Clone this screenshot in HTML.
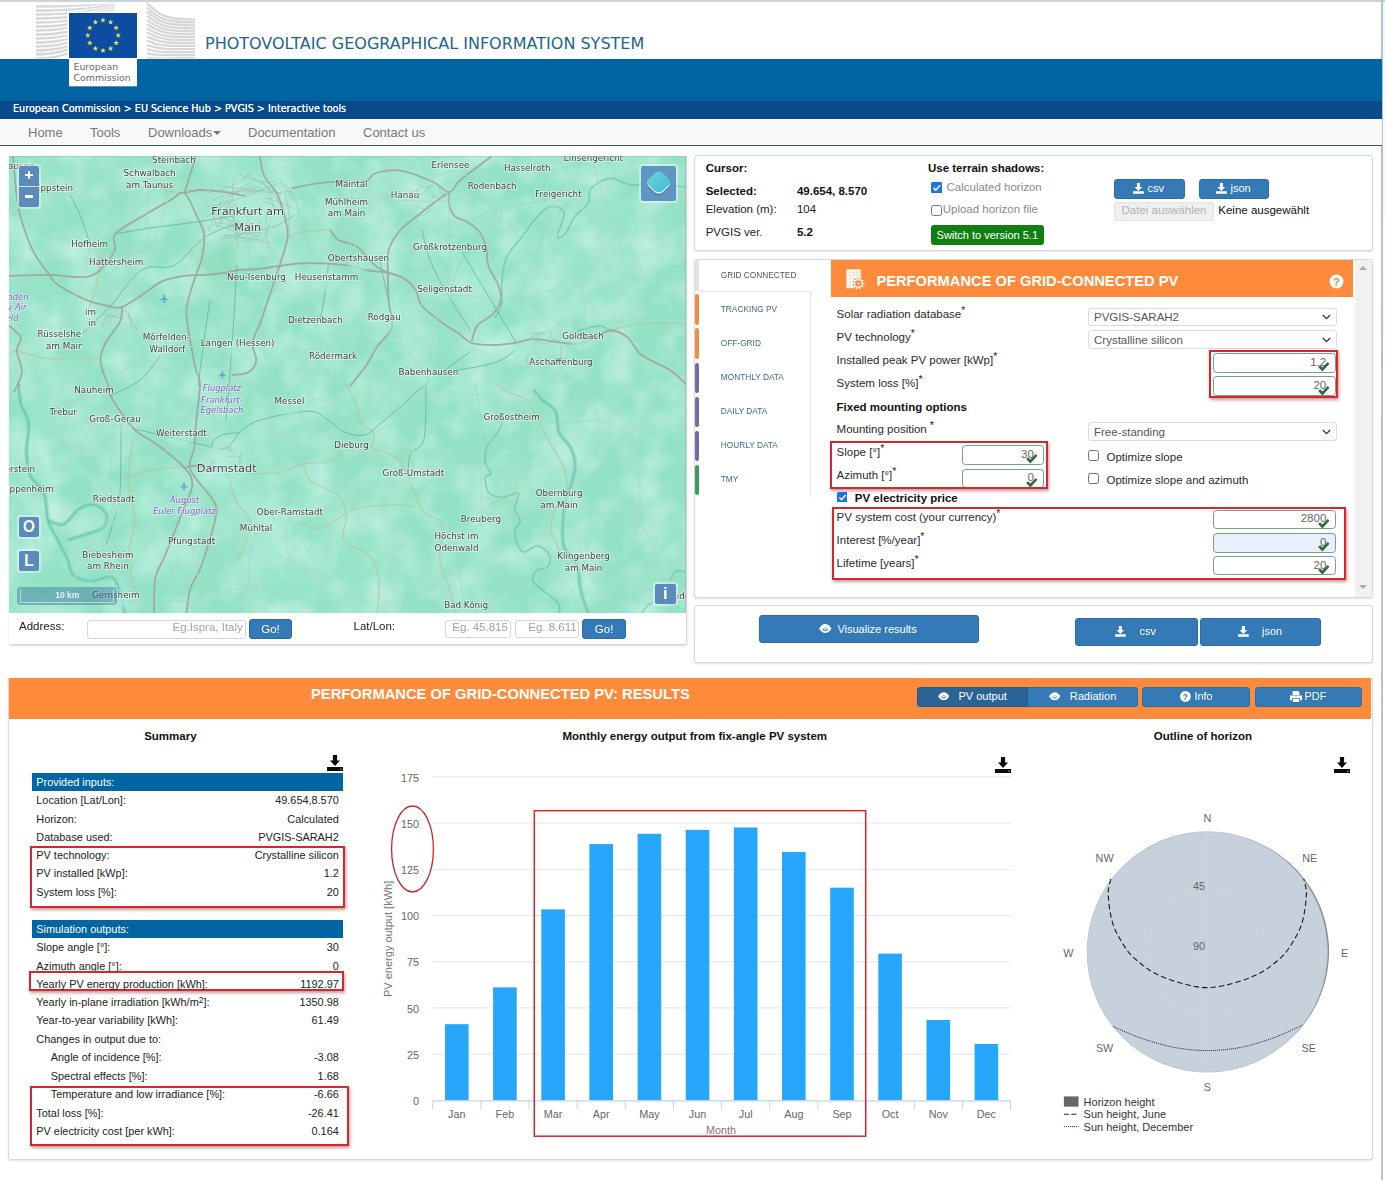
<!DOCTYPE html>
<html lang="en">
<head>
<meta charset="utf-8">
<title>PVGIS - Photovoltaic Geographical Information System</title>
<style>
*{box-sizing:border-box;margin:0;padding:0}
html,body{width:1385px;height:1180px;overflow:hidden;background:#fff}
body{position:relative;font-family:"Liberation Sans",Arial,sans-serif;font-size:12px;color:#222}
.a{position:absolute}
.t{position:absolute;white-space:nowrap;line-height:1}
.v{font-family:"DejaVu Sans","Liberation Sans",sans-serif}
.b{font-weight:bold}
.panel{position:absolute;background:#fff;border:1px solid #d9d9d9;border-radius:3px;box-shadow:0 1px 2px rgba(0,0,0,.12)}
.btn{position:absolute;background:#337ab7;border:1px solid #2e6da4;border-radius:3px;color:#fff;text-align:center;white-space:nowrap}
.inp{position:absolute;background:#fff;border:1px solid #d6d6d6;border-radius:3px}
.red{position:absolute;border:2px solid #d5282e;box-shadow:1px 2px 3px rgba(120,0,0,.4)}
</style>
</head>
<body>
<!-- page frame -->
<div class="a" style="left:0;top:0;width:1385px;height:2px;background:#cdd1d8"></div>
<div class="a" style="left:1381px;top:0;width:1.5px;height:1180px;background:#bcc0c7"></div>
<div class="a" style="left:1382.6px;top:2px;width:2.4px;height:1178px;background:linear-gradient(#eefaff,#fff 40%)"></div>

<!-- HEADER -->
<div id="hdr">
<div class="a" style="left:0;top:59px;width:1381.5px;height:42px;background:#0065a2"></div>
<div class="a" style="left:0;top:100.5px;width:1381.5px;height:18.5px;background:#084a8b"></div>
<div class="a" style="left:0;top:119px;width:1381.5px;height:26.5px;background:#f8f8f8"></div>
<div class="a" style="left:0;top:145px;width:1381.5px;height:1.3px;background:#3d5360"></div>
<div class="t v" style="left:205px;top:35.5px;font-size:16px;color:#1d6490">PHOTOVOLTAIC GEOGRAPHICAL INFORMATION SYSTEM</div>
<div class="t v" style="left:13px;top:103.6px;font-size:9.65px;color:#fff;text-shadow:0 0 .6px #fff">European Commission &gt; EU Science Hub &gt; PVGIS &gt; Interactive tools</div>
<div class="t" style="left:28px;top:125.5px;font-size:13px;color:#777">Home</div>
<div class="t" style="left:90px;top:125.5px;font-size:13px;color:#777">Tools</div>
<div class="t" style="left:148px;top:125.5px;font-size:13px;color:#777">Downloads</div>
<div class="a" style="left:213px;top:131px;width:0;height:0;border-left:4px solid transparent;border-right:4px solid transparent;border-top:4px solid #777"></div>
<div class="t" style="left:248px;top:125.5px;font-size:13px;color:#777">Documentation</div>
<div class="t" style="left:363px;top:125.5px;font-size:13px;color:#777">Contact us</div>
</div>
<!-- LOGO -->
<!--LOGO-S--><svg class="a" style="left:30px;top:0" width="175" height="92" viewBox="30 0 175 92">
<defs><clipPath id="lc"><rect x="30" y="2" width="175" height="56.5"/></clipPath></defs><g clip-path="url(#lc)">
<g fill="#d6d7d9">
<path d="M36 5.25 C 70 5.25, 92 4.62, 115 3.18 L115 3.62 C 92 6.38, 70 7.75, 36 7.75Z"/>
<path d="M36 9.25 C 70 9.25, 92 7.72, 115 3.80 L115 4.24 C 92 9.47, 70 11.75, 36 11.75Z"/>
<path d="M36 13.25 C 70 13.25, 92 10.82, 115 4.42 L115 4.86 C 92 12.57, 70 15.75, 36 15.75Z"/>
<path d="M36 17.25 C 70 17.25, 92 13.93, 115 5.04 L115 5.48 C 92 15.68, 70 19.75, 36 19.75Z"/>
<path d="M36 21.25 C 70 21.25, 92 17.02, 115 5.66 L115 6.10 C 92 18.77, 70 23.75, 36 23.75Z"/>
<path d="M36 25.25 C 70 25.25, 92 20.12, 115 6.28 L115 6.72 C 92 21.88, 70 27.75, 36 27.75Z"/>
<path d="M36 29.25 C 70 29.25, 92 23.23, 115 6.90 L115 7.34 C 92 24.98, 70 31.75, 36 31.75Z"/>
<path d="M36 33.25 C 70 33.25, 92 26.32, 115 7.52 L115 7.96 C 92 28.07, 70 35.75, 36 35.75Z"/>
<path d="M36 37.25 C 70 37.25, 92 29.43, 115 8.14 L115 8.58 C 92 31.18, 70 39.75, 36 39.75Z"/>
<path d="M36 41.25 C 70 41.25, 92 32.52, 115 8.76 L115 9.20 C 92 34.27, 70 43.75, 36 43.75Z"/>
<path d="M36 45.25 C 70 45.25, 92 35.62, 115 9.38 L115 9.82 C 92 37.38, 70 47.75, 36 47.75Z"/>
<path d="M36 49.25 C 70 49.25, 92 38.73, 115 10.00 L115 10.44 C 92 40.48, 70 51.75, 36 51.75Z"/>
<path d="M36 53.25 C 70 53.25, 92 41.83, 115 10.62 L115 11.06 C 92 43.58, 70 55.75, 36 55.75Z"/>
<path d="M36 57.25 C 70 57.25, 92 44.92, 115 11.24 L115 11.68 C 92 46.67, 70 59.75, 36 59.75Z"/>
</g>
<g fill="none" stroke="#d6d7d9" stroke-width="2.2">
<path d="M147 3.0 C 160 16.7, 168 19.5, 195 19.5"/>
<path d="M147 7.2 C 160 20.0, 168 22.4, 195 22.4"/>
<path d="M147 11.4 C 160 23.3, 168 25.4, 195 25.4"/>
<path d="M147 15.6 C 160 26.6, 168 28.4, 195 28.4"/>
<path d="M147 19.8 C 160 29.9, 168 31.3, 195 31.3"/>
<path d="M147 24.0 C 160 33.2, 168 34.2, 195 34.2"/>
<path d="M147 28.2 C 160 36.5, 168 37.2, 195 37.2"/>
<path d="M147 32.4 C 160 39.8, 168 40.2, 195 40.2"/>
<path d="M147 36.6 C 160 43.1, 168 43.1, 195 43.1"/>
<path d="M147 40.8 C 160 46.4, 168 46.0, 195 46.0"/>
<path d="M147 45.0 C 160 49.7, 168 49.0, 195 49.0"/>
<path d="M147 49.2 C 160 53.0, 168 52.0, 195 52.0"/>
<path d="M147 53.4 C 160 56.3, 168 54.9, 195 54.9"/>
<path d="M147 57.6 C 160 59.6, 168 57.9, 195 57.9"/>
</g>
</g>
<rect x="67.5" y="11.5" width="71" height="47" fill="#fff"/>
<rect x="69" y="13" width="68" height="45" fill="#0c4da2"/>
<polygon points="103.00,17.30 103.72,19.21 105.76,19.30 104.16,20.58 104.70,22.55 103.00,21.42 101.30,22.55 101.84,20.58 100.24,19.30 102.28,19.21" fill="#e9e04f"/>
<polygon points="110.60,19.34 111.32,21.25 113.36,21.34 111.76,22.61 112.30,24.58 110.60,23.45 108.90,24.58 109.44,22.61 107.84,21.34 109.88,21.25" fill="#e9e04f"/>
<polygon points="116.16,24.90 116.88,26.81 118.92,26.90 117.32,28.18 117.87,30.15 116.16,29.02 114.46,30.15 115.01,28.18 113.41,26.90 115.45,26.81" fill="#e9e04f"/>
<polygon points="118.20,32.50 118.92,34.41 120.96,34.50 119.36,35.78 119.90,37.75 118.20,36.62 116.50,37.75 117.04,35.78 115.44,34.50 117.48,34.41" fill="#e9e04f"/>
<polygon points="116.16,40.10 116.88,42.01 118.92,42.10 117.32,43.38 117.87,45.35 116.16,44.22 114.46,45.35 115.01,43.38 113.41,42.10 115.45,42.01" fill="#e9e04f"/>
<polygon points="110.60,45.66 111.32,47.58 113.36,47.67 111.76,48.94 112.30,50.91 110.60,49.78 108.90,50.91 109.44,48.94 107.84,47.67 109.88,47.58" fill="#e9e04f"/>
<polygon points="103.00,47.70 103.72,49.61 105.76,49.70 104.16,50.98 104.70,52.95 103.00,51.82 101.30,52.95 101.84,50.98 100.24,49.70 102.28,49.61" fill="#e9e04f"/>
<polygon points="95.40,45.66 96.12,47.58 98.16,47.67 96.56,48.94 97.10,50.91 95.40,49.78 93.70,50.91 94.24,48.94 92.64,47.67 94.68,47.58" fill="#e9e04f"/>
<polygon points="89.84,40.10 90.55,42.01 92.59,42.10 90.99,43.38 91.54,45.35 89.84,44.22 88.13,45.35 88.68,43.38 87.08,42.10 89.12,42.01" fill="#e9e04f"/>
<polygon points="87.80,32.50 88.52,34.41 90.56,34.50 88.96,35.78 89.50,37.75 87.80,36.62 86.10,37.75 86.64,35.78 85.04,34.50 87.08,34.41" fill="#e9e04f"/>
<polygon points="89.84,24.90 90.55,26.81 92.59,26.90 90.99,28.18 91.54,30.15 89.84,29.02 88.13,30.15 88.68,28.18 87.08,26.90 89.12,26.81" fill="#e9e04f"/>
<polygon points="95.40,19.34 96.12,21.25 98.16,21.34 96.56,22.61 97.10,24.58 95.40,23.45 93.70,24.58 94.24,22.61 92.64,21.34 94.68,21.25" fill="#e9e04f"/>
<rect x="69" y="58" width="68" height="28.5" fill="#fff"/>
<rect x="69" y="86.5" width="68" height="1" fill="#0a4f85" opacity=".55"/>
<text x="73.5" y="70.3" font-family="DejaVu Sans, sans-serif" font-size="9.4" fill="#6a6a6a">European</text>
<text x="73.5" y="80.6" font-family="DejaVu Sans, sans-serif" font-size="9.4" fill="#6a6a6a">Commission</text>
</svg><!--LOGO-E-->

<!-- MAP -->
<!--MAP-S--><div class="a" style="left:8.5px;top:155.5px;width:678px;height:489px;border:1px solid #d4d4d4;border-top:0;border-radius:0 0 3px 3px;box-shadow:0 1px 2px rgba(0,0,0,.15)"></div>
<svg class="a" style="left:9px;top:156px" width="676.5" height="457" viewBox="9 156 676.5 457">
<defs><filter id="bl" x="-20%" y="-20%" width="140%" height="140%"><feGaussianBlur stdDeviation="6"/></filter><filter id="tx" x="0" y="0" width="100%" height="100%"><feTurbulence type="fractalNoise" baseFrequency="0.03" numOctaves="3" seed="4"/><feColorMatrix values="0 0 0 0 0.67  0 0 0 0 0.93  0 0 0 0 0.86  1.6 0 0 0 -0.62"/></filter><filter id="tx2" x="0" y="0" width="100%" height="100%"><feTurbulence type="fractalNoise" baseFrequency="0.022" numOctaves="2" seed="9"/><feColorMatrix values="0 0 0 0 0.5  0 0 0 0 0.82  0 0 0 0 0.68  0 1.5 0 0 -0.62"/></filter><filter id="bl2" x="-30%" y="-30%" width="160%" height="160%"><feGaussianBlur stdDeviation="2.5"/></filter></defs>
<rect x="9" y="156" width="677" height="457" fill="#93e2c6"/>
<g filter="url(#bl)">
<ellipse cx="250" cy="205" rx="45" ry="35" fill="#a6ead6" opacity="0.8"/>
<ellipse cx="215" cy="255" rx="30" ry="18" fill="#86d9b8" opacity="0.7"/>
<ellipse cx="435" cy="200" rx="30" ry="25" fill="#a6ead6" opacity="0.7"/>
<ellipse cx="225" cy="470" rx="25" ry="30" fill="#a3e9d4" opacity="0.7"/>
<ellipse cx="520" cy="345" rx="55" ry="18" fill="#a3e9d4" opacity="0.7"/>
<ellipse cx="480" cy="290" rx="18" ry="40" fill="#a6ead6" opacity="0.7"/>
<ellipse cx="600" cy="260" rx="55" ry="60" fill="#9ae6cc" opacity="0.7"/>
<ellipse cx="150" cy="330" rx="50" ry="25" fill="#97e5c8" opacity="0.6"/>
<ellipse cx="320" cy="560" rx="70" ry="40" fill="#9ae6cc" opacity="0.6"/>
<ellipse cx="60" cy="250" rx="40" ry="50" fill="#96e4c7" opacity="0.6"/>
<ellipse cx="620" cy="480" rx="50" ry="90" fill="#93e3c6" opacity="0.6"/>
<ellipse cx="260" cy="520" rx="25" ry="60" fill="#9be7ce" opacity="0.6"/>
<ellipse cx="390" cy="300" rx="14" ry="40" fill="#a3e9d4" opacity="0.6"/>
<ellipse cx="560" cy="470" rx="12" ry="70" fill="#a6ead6" opacity="0.7"/>
<ellipse cx="40" cy="480" rx="20" ry="90" fill="#a0e8d2" opacity="0.6"/>
</g>
<rect x="9" y="156" width="677" height="457" filter="url(#tx)" opacity=".8"/>
<rect x="9" y="156" width="677" height="457" filter="url(#tx2)" opacity=".55"/>
<g fill="none" stroke="#7fd3bd" stroke-width="4.5" stroke-opacity=".55" stroke-linejoin="round">
<path d="M18.7 384.0 C19.0 387.2 19.1 397.0 20.7 403.5 C22.3 410.0 27.5 414.9 28.5 423.0 C29.5 431.1 26.2 443.4 26.5 452.2 C26.8 461.0 27.5 468.8 30.4 475.6 C33.3 482.4 41.1 485.7 44.0 493.2 C46.9 500.7 45.7 512.7 48.0 520.5 C50.3 528.3 54.5 533.5 57.7 540.0 C61.0 546.5 64.9 553.6 67.5 559.4 C70.1 565.2 69.4 571.4 73.3 575.0 C77.2 578.6 84.7 580.6 90.9 580.9 C97.1 581.2 105.9 576.0 110.4 577.0 C115.0 578.0 115.8 580.5 118.2 586.7 C120.6 592.9 123.9 609.5 125.0 614.0"/>
<path d="M48.0 520.5 C50.6 521.1 58.4 526.4 63.6 524.4 C68.8 522.4 74.0 512.0 79.2 508.8 C84.4 505.6 90.2 503.9 94.8 504.9 C99.3 505.9 105.2 510.7 106.5 514.6 C107.8 518.5 105.8 525.0 102.6 528.2 C99.3 531.4 92.8 532.0 87.0 534.0 C81.2 536.0 70.8 539.0 67.5 540.0"/>
<path d="M534.0 389.8 C535.3 391.4 538.2 396.0 541.8 399.6 C545.4 403.2 552.5 405.8 555.4 411.3 C558.3 416.8 556.7 426.5 559.3 432.7 C561.9 438.9 568.4 442.8 571.0 448.3 C573.6 453.8 575.0 459.7 575.0 465.9 C575.0 472.1 572.6 479.5 571.0 485.4 C569.4 491.2 566.5 491.3 565.2 501.0 C563.9 510.7 561.2 533.1 563.2 543.8 C565.2 554.5 574.0 557.5 576.9 565.3 C579.8 573.1 578.9 582.5 580.8 590.6 C582.7 598.7 587.2 610.1 588.5 614.0"/>
</g>
<g fill="none" stroke="#7fb6c4" stroke-width="1.2" stroke-opacity=".7" stroke-dasharray="3 2.5">
<path d="M18.7 384.0 C19.0 387.2 19.1 397.0 20.7 403.5 C22.3 410.0 27.5 414.9 28.5 423.0 C29.5 431.1 26.2 443.4 26.5 452.2 C26.8 461.0 27.5 468.8 30.4 475.6 C33.3 482.4 41.1 485.7 44.0 493.2 C46.9 500.7 47.3 516.0 48.0 520.5"/>
</g>
<g fill="none" stroke="#63c29d" stroke-width="1.7" stroke-opacity=".6" stroke-linejoin="round">
<path d="M686.0 187.2 C680.2 186.5 660.1 183.6 651.0 183.3 C641.9 183.0 638.2 186.0 631.4 185.2 C624.6 184.4 616.8 177.8 610.0 178.4 C603.2 179.0 594.1 184.9 590.5 189.0 C586.9 193.1 591.1 198.2 588.5 202.8 C585.9 207.4 578.9 211.2 575.0 216.4 C571.1 221.6 567.9 230.7 565.0 234.0 C562.1 237.3 557.6 239.6 557.4 236.0 C557.2 232.4 565.3 217.4 564.0 212.5 C562.7 207.6 554.6 205.4 549.6 206.7 C544.6 208.0 538.2 215.8 534.0 220.3 C529.8 224.9 528.8 227.8 524.2 234.0 C519.7 240.2 510.4 249.3 506.7 257.4 C503.0 265.5 502.6 274.9 501.8 282.7 C501.0 290.5 502.9 298.3 501.8 304.2 C500.7 310.1 496.1 315.5 495.0 317.8"/>
<path d="M502.8 423.0 C502.1 424.3 501.5 426.9 498.9 430.8 C496.3 434.7 489.5 441.2 487.2 446.4 C484.9 451.6 484.6 457.4 485.2 462.0 C485.8 466.6 491.0 471.1 491.0 473.7 C491.0 476.3 485.5 474.4 485.2 477.6 C484.9 480.9 486.2 490.0 489.1 493.2 C492.0 496.4 497.9 497.0 502.8 497.0 C507.7 497.0 516.4 491.2 518.4 493.2 C520.4 495.2 514.2 504.2 514.5 508.8 C514.8 513.4 520.3 516.6 520.3 520.5 C520.3 524.4 514.2 527.0 514.5 532.2 C514.8 537.4 518.4 549.3 522.3 551.6 C526.2 553.9 533.3 545.1 537.9 545.8 C542.5 546.4 548.0 551.9 549.6 555.5 C551.2 559.1 549.9 564.6 547.6 567.2 C545.3 569.8 538.2 568.5 535.9 571.1 C533.6 573.7 530.4 577.6 534.0 582.8 C537.6 588.0 553.2 597.1 557.4 602.3 C561.6 607.5 559.0 612.0 559.3 614.0"/>
<path d="M534.0 389.8 C535.3 391.4 538.2 396.0 541.8 399.6 C545.4 403.2 552.5 405.8 555.4 411.3 C558.3 416.8 556.7 426.5 559.3 432.7 C561.9 438.9 568.4 442.8 571.0 448.3 C573.6 453.8 575.0 459.7 575.0 465.9 C575.0 472.1 572.6 479.5 571.0 485.4 C569.4 491.2 566.5 491.3 565.2 501.0 C563.9 510.7 561.2 533.1 563.2 543.8 C565.2 554.5 574.0 557.5 576.9 565.3 C579.8 573.1 578.9 582.5 580.8 590.6 C582.7 598.7 587.2 610.1 588.5 614.0"/>
<path d="M18.7 384.0 C19.0 387.2 19.1 397.0 20.7 403.5 C22.3 410.0 27.5 414.9 28.5 423.0 C29.5 431.1 26.2 443.4 26.5 452.2 C26.8 461.0 27.5 468.8 30.4 475.6 C33.3 482.4 41.1 485.7 44.0 493.2 C46.9 500.7 45.7 512.7 48.0 520.5 C50.3 528.3 54.5 533.5 57.7 540.0 C61.0 546.5 64.9 553.6 67.5 559.4 C70.1 565.2 69.4 571.4 73.3 575.0 C77.2 578.6 84.7 580.6 90.9 580.9 C97.1 581.2 105.9 576.0 110.4 577.0 C115.0 578.0 115.8 580.5 118.2 586.7 C120.6 592.9 123.9 609.5 125.0 614.0"/>
<path d="M48.0 520.5 C50.6 521.1 58.4 526.4 63.6 524.4 C68.8 522.4 74.0 512.0 79.2 508.8 C84.4 505.6 90.2 503.9 94.8 504.9 C99.3 505.9 105.2 510.7 106.5 514.6 C107.8 518.5 105.8 525.0 102.6 528.2 C99.3 531.4 92.8 532.0 87.0 534.0 C81.2 536.0 70.8 539.0 67.5 540.0"/>
<path d="M641.2 614.0 C642.8 612.2 646.1 604.7 651.0 603.0 C655.9 601.3 664.6 602.8 670.4 604.0 C676.2 605.2 683.4 609.0 686.0 610.0"/>
<path d="M670.0 580.0 C671.0 578.5 673.3 572.3 676.0 571.0 C678.7 569.7 684.3 571.8 686.0 572.0"/>
<path d="M610.0 330.5 C608.3 329.8 603.7 326.4 600.0 326.0 C596.3 325.6 592.0 327.0 588.0 328.0 C584.0 329.0 578.0 331.3 576.0 332.0"/>
</g>
<g fill="none" stroke="#5aa98f" stroke-width=".9" stroke-opacity=".75">
<path d="M239.0 222.3 C233.2 224.9 214.7 230.8 204.0 237.9 C193.3 245.1 183.8 260.3 174.7 265.2 C165.6 270.1 156.2 265.2 149.4 267.1 C142.6 269.1 140.0 270.7 133.8 276.9 C127.6 283.1 118.8 296.6 112.3 304.1 C105.8 311.6 99.7 316.8 94.8 321.7 C89.9 326.6 85.0 331.4 83.0 333.4"/>
<path d="M236.8 265.2 C236.2 276.2 234.3 311.3 233.0 331.4 C231.7 351.5 230.2 371.2 229.0 386.0 C227.8 400.8 226.5 414.3 226.0 420.0"/>
<path d="M328.4 265.2 C327.4 272.3 324.6 297.6 322.6 308.0 C320.7 318.4 317.7 324.2 316.7 327.5"/>
<path d="M461.8 251.5 L516.4 343.0"/>
<path d="M456.0 370.4 C462.5 369.1 485.2 365.8 495.0 362.6 C504.8 359.4 511.2 352.9 514.5 351.0"/>
<path d="M121.0 423.0 C120.8 434.7 121.2 476.8 120.0 493.0 C118.8 509.2 116.3 511.3 114.0 520.0 C111.7 528.7 107.3 540.8 106.0 545.0"/>
<path d="M229.0 446.4 C232.9 442.5 239.4 428.9 252.4 423.0 C265.4 417.1 294.6 412.0 307.0 411.3 C319.4 410.6 320.0 415.4 326.5 419.0 C333.0 422.6 339.5 430.1 346.0 432.7 C352.5 435.3 359.7 436.3 365.5 434.7 C371.3 433.1 374.5 428.2 381.0 423.0 C387.5 417.8 396.9 410.0 404.4 403.5 C411.9 397.0 415.0 392.6 425.9 384.0 C436.8 375.4 462.6 357.3 470.0 352.0"/>
<path d="M425.9 384.0 C425.6 393.1 426.6 426.9 424.0 438.6 C421.4 450.3 412.9 447.7 410.3 454.2 C407.7 460.7 408.6 473.7 408.3 477.6"/>
<path d="M211.7 448.3 C212.0 447.0 211.8 442.8 213.7 440.5 C215.6 438.2 219.2 436.0 223.4 434.7 C227.6 433.4 236.4 433.0 239.0 432.7"/>
<path d="M115.2 234.0 C121.0 233.0 136.5 230.0 150.0 228.0 C163.5 226.0 181.2 224.2 196.0 222.0 C210.8 219.8 231.8 216.2 239.0 215.0"/>
<path d="M110.4 395.7 C115.3 393.1 131.7 386.6 140.0 380.0 C148.3 373.4 156.7 360.0 160.0 356.0"/>
<path d="M133.8 428.8 C139.8 430.2 157.1 434.0 170.0 437.0 C182.9 440.0 204.2 445.3 211.0 447.0"/>
<path d="M210.0 300.0 C209.0 306.7 206.0 325.7 204.0 340.0 C202.0 354.3 199.0 378.3 198.0 386.0"/>
<path d="M388.8 302.2 C388.0 298.5 385.5 286.7 384.0 280.0 C382.5 273.3 380.7 265.0 380.0 262.0"/>
<path d="M422.0 230.0 C423.3 235.0 426.2 250.0 430.0 260.0 C433.8 270.0 438.3 278.3 445.0 290.0 C451.7 301.7 465.8 323.3 470.0 330.0"/>
<path d="M70.0 195.0 C71.7 198.3 76.7 207.0 80.0 215.0 C83.3 223.0 88.3 238.3 90.0 243.0"/>
</g>
<g fill="none" stroke="#b3c8a3" stroke-width="1.3" stroke-opacity=".8">
<path d="M248.5 473.7 C253.4 473.5 268.6 474.3 277.7 472.7 C286.8 471.1 294.9 465.8 303.0 464.0 C311.1 462.2 319.3 464.1 326.5 462.0 C333.7 459.9 338.9 453.6 346.0 451.3 C353.1 449.0 364.8 451.4 369.4 448.3 C373.9 445.2 374.6 436.6 373.3 432.7 C372.0 428.8 364.4 429.9 361.5 425.0 C358.6 420.1 358.3 410.3 355.7 403.5 C353.1 396.7 347.6 387.2 346.0 384.0"/>
<path d="M373.3 448.3 C377.2 449.9 390.8 453.1 396.6 458.0 C402.4 462.9 405.1 471.1 408.3 477.6 C411.5 484.1 413.4 491.2 416.0 497.0 C418.6 502.8 420.1 508.7 424.0 512.6 C427.9 516.5 436.3 517.9 439.5 520.5 C442.7 523.1 442.8 526.9 443.4 528.2"/>
<path d="M303.0 464.0 C304.3 466.9 305.2 476.3 311.0 481.5 C316.8 486.7 332.2 489.1 338.0 495.0 C343.8 500.9 345.0 509.1 346.0 516.6 C347.0 524.1 340.1 533.5 344.0 540.0 C347.9 546.5 363.6 549.0 369.4 555.5 C375.2 562.0 377.7 569.2 379.0 579.0 C380.3 588.8 377.3 608.2 377.0 614.0"/>
<path d="M281.6 514.6 C287.5 516.9 307.3 527.6 316.7 528.2 C326.1 528.9 331.5 521.7 338.0 518.5 C344.5 515.3 346.2 511.1 355.7 508.8 C365.1 506.5 384.6 505.2 394.7 504.9 C404.8 504.6 412.4 506.5 416.0 506.8"/>
<path d="M497.0 384.0 C498.6 385.3 501.8 389.2 506.7 391.8 C511.6 394.4 521.0 395.1 526.2 399.6 C531.4 404.1 534.0 411.9 537.9 419.0 C541.8 426.1 545.7 435.3 549.6 442.5 C553.5 449.7 558.4 455.5 561.3 462.0 C564.2 468.5 566.4 476.3 567.0 481.5 C567.6 486.7 567.5 488.0 565.2 493.2 C563.0 498.4 555.8 506.1 553.5 512.6 C551.2 519.1 550.9 526.5 551.5 532.0 C552.1 537.5 555.8 541.2 557.4 545.8 C559.0 550.4 560.6 557.1 561.3 559.4"/>
<path d="M610.0 330.5 C615.2 329.4 628.5 324.8 641.2 323.6 C653.9 322.5 678.5 323.6 686.0 323.6"/>
<path d="M9.0 354.8 C10.3 354.2 10.3 350.4 16.8 351.0 C23.3 351.6 34.4 357.6 48.0 358.7 C61.6 359.8 90.2 357.9 98.7 357.8"/>
<path d="M229.0 475.0 C230.0 479.2 231.5 492.5 235.0 500.0 C238.5 507.5 248.3 512.5 250.0 520.0 C251.7 527.5 247.3 538.3 245.0 545.0 C242.7 551.7 237.5 557.5 236.0 560.0"/>
<path d="M443.4 528.2 C442.8 533.5 438.9 549.7 440.0 560.0 C441.1 570.3 447.3 581.0 450.0 590.0 C452.7 599.0 455.0 610.0 456.0 614.0"/>
<path d="M133.0 440.0 C132.2 446.7 127.7 466.7 128.0 480.0 C128.3 493.3 135.0 506.7 135.0 520.0 C135.0 533.3 127.2 546.7 128.0 560.0 C128.8 573.3 138.0 593.3 140.0 600.0"/>
<path d="M184.0 467.0 C178.3 467.5 160.7 467.8 150.0 470.0 C139.3 472.2 125.0 478.3 120.0 480.0"/>
<path d="M90.0 243.0 C91.7 245.8 99.2 252.2 100.0 260.0 C100.8 267.8 97.0 281.7 95.0 290.0 C93.0 298.3 89.2 306.7 88.0 310.0"/>
<path d="M150.0 175.0 C152.5 177.5 159.3 187.0 165.0 190.0 C170.7 193.0 180.8 192.5 184.0 193.0"/>
<path d="M518.0 493.0 C515.0 494.2 505.0 498.0 500.0 500.0 C495.0 502.0 490.0 504.2 488.0 505.0"/>
<path d="M330.4 230.0 C325.3 230.3 307.1 230.7 300.0 232.0 C292.9 233.3 289.6 236.9 287.5 237.9"/>
</g>
<g fill="none" stroke="#9ea69d" stroke-width="1.8" stroke-opacity=".92" stroke-linejoin="round">
<path d="M13.0 156.0 C13.9 164.8 15.5 193.0 18.7 208.6 C21.9 224.2 27.5 238.9 32.4 249.6 C37.3 260.3 43.8 267.1 48.0 273.0 C52.2 278.9 51.2 280.2 57.7 284.7 C64.2 289.2 78.5 296.6 87.0 300.2 C95.5 303.8 102.6 304.9 108.4 306.0 C114.2 307.1 115.8 309.2 122.0 307.0 C128.2 304.8 138.7 296.9 145.5 292.5 C152.3 288.1 156.5 283.6 163.0 280.8 C169.5 278.0 177.6 276.9 184.4 275.9 C191.2 274.9 197.5 275.4 204.0 274.9 C210.5 274.4 217.6 273.8 223.4 273.0 C229.2 272.2 233.2 270.7 239.0 270.0 C244.8 269.3 251.2 269.7 258.0 269.0 C264.8 268.3 271.5 267.0 279.7 266.0 C287.9 265.0 295.9 263.3 307.0 263.2 C318.1 263.1 336.2 264.1 346.0 265.2 C355.8 266.3 358.4 268.7 365.5 270.0 C372.6 271.3 382.3 271.5 388.8 273.0 C395.3 274.5 399.9 275.9 404.4 278.8 C408.9 281.7 413.1 286.0 416.0 290.5 C418.9 295.0 417.4 300.5 422.0 306.0 C426.6 311.5 437.2 319.0 443.4 323.6 C449.6 328.2 454.3 330.2 459.0 333.4 C463.7 336.6 465.6 341.1 471.6 343.0 C477.6 344.9 487.9 345.0 495.0 345.0 C502.1 345.0 508.0 344.0 514.5 343.0 C521.0 342.0 526.9 339.3 534.0 339.2 C541.1 339.1 550.2 341.4 557.4 342.2 C564.5 343.0 571.0 344.5 576.9 344.0 C582.8 343.5 587.0 341.4 592.5 339.2 C598.0 336.9 604.2 330.8 610.0 330.5 C615.8 330.2 622.3 333.2 627.5 337.3 C632.7 341.4 634.1 349.3 641.2 354.8 C648.4 360.3 662.9 365.5 670.4 370.4 C677.9 375.3 683.4 381.7 686.0 384.0"/>
<path d="M122.0 307.0 C121.7 309.4 122.6 316.0 120.0 321.7 C117.4 327.4 109.7 335.3 106.5 341.2 C103.3 347.1 101.2 351.9 100.6 356.8 C99.9 361.7 101.3 365.5 102.6 370.4 C103.9 375.3 107.1 381.8 108.4 386.0 C109.7 390.2 106.2 388.6 110.4 395.7 C114.6 402.8 126.0 420.7 133.8 428.8 C141.6 436.9 148.6 437.9 157.0 444.4 C165.4 450.9 178.5 461.0 184.4 467.8 C190.3 474.6 192.8 477.3 192.2 485.4 C191.5 493.5 185.0 504.9 180.5 516.6 C176.0 528.3 169.2 545.1 165.0 555.5 C160.8 565.9 157.0 569.2 155.2 579.0 C153.4 588.8 154.4 608.2 154.2 614.0"/>
<path d="M9.0 275.9 C15.8 275.7 36.4 274.9 50.0 274.9 C63.6 274.9 80.2 279.8 90.9 275.9 C101.6 272.0 110.2 258.5 114.3 251.5 C118.3 244.5 110.0 240.2 115.2 234.0 C120.4 227.8 136.2 220.2 145.5 214.5 C154.8 208.8 164.3 203.5 170.8 199.9 C177.3 196.3 180.2 190.6 184.4 193.0 C188.6 195.4 192.7 207.7 196.0 214.5 C199.3 221.3 203.0 226.8 204.0 234.0 C205.0 241.2 203.3 250.6 202.0 257.4 C200.7 264.2 197.9 269.0 196.0 274.9 C194.1 280.8 191.9 286.3 190.3 292.5 C188.7 298.7 186.4 303.9 186.4 312.0 C186.4 320.1 188.7 331.5 190.3 341.2 C191.9 350.9 194.4 363.3 196.0 370.4 C197.6 377.5 200.0 375.2 200.0 384.0 C200.0 392.8 197.0 412.3 196.0 423.0 C195.0 433.7 195.1 440.5 194.2 448.3 C193.2 456.1 187.1 461.0 190.3 469.8 C193.6 478.6 209.5 493.2 213.7 501.0 C217.9 508.8 216.2 510.1 215.6 516.6 C214.9 523.1 212.4 531.2 209.8 540.0 C207.2 548.8 203.2 561.1 200.0 569.2 C196.8 577.3 192.6 581.2 190.3 588.7 C188.0 596.2 187.1 609.8 186.4 614.0"/>
<path d="M184.4 193.0 C187.0 192.5 193.2 190.2 200.0 190.0 C206.8 189.8 217.5 191.0 225.0 192.0 C232.5 193.0 241.7 195.3 245.0 196.0"/>
<path d="M184.4 193.0 C185.3 190.0 188.1 181.2 190.0 175.0 C191.9 168.8 195.0 159.2 196.0 156.0"/>
<path d="M260.0 156.0 C260.7 159.2 261.1 169.0 264.0 175.5 C266.9 182.0 274.1 187.5 277.7 195.0 C281.3 202.5 283.9 213.2 285.5 220.3 C287.1 227.5 288.5 230.4 287.5 237.9 C286.5 245.4 282.9 254.8 279.7 265.2 C276.4 275.6 271.3 290.5 268.0 300.2 C264.7 309.9 262.6 316.5 260.0 323.6 C257.4 330.7 253.0 336.8 252.4 343.0 C251.8 349.2 256.9 355.8 256.3 360.7 C255.7 365.6 252.6 370.0 248.5 372.4 C244.4 374.8 234.8 374.6 232.0 375.0"/>
<path d="M447.3 193.0 C443.4 195.9 431.8 204.4 424.0 210.6 C416.2 216.8 406.4 223.5 400.5 230.0 C394.6 236.5 390.9 242.4 388.8 249.6 C386.7 256.8 387.9 264.2 387.9 273.0 C387.9 281.8 388.1 293.1 388.8 302.2 C389.5 311.3 393.8 320.0 391.8 327.5 C389.8 335.0 381.4 340.5 377.0 347.0 C372.6 353.5 370.0 360.0 365.5 366.5 C361.0 373.0 352.6 382.8 350.0 386.0"/>
<path d="M291.4 188.2 C295.6 187.4 308.9 184.5 316.7 183.3 C324.5 182.2 329.9 181.6 338.0 181.3 C346.1 181.0 359.3 182.6 365.5 181.3 C371.7 180.0 369.2 175.3 375.0 173.5 C380.8 171.7 391.1 169.3 400.5 170.6 C409.9 171.9 423.6 177.7 431.7 181.3 C439.8 184.9 444.8 192.0 449.3 192.0 C453.9 192.0 453.9 185.8 459.0 181.3 C464.1 176.8 474.5 169.2 480.0 165.0 C485.5 160.8 490.0 157.5 492.0 156.0"/>
<path d="M449.3 192.0 C449.3 194.1 448.4 200.6 449.3 204.7 C450.2 208.8 451.9 213.5 455.0 216.4 C458.1 219.3 463.6 219.7 467.7 222.3 C471.8 224.9 476.3 227.8 479.4 232.0 C482.5 236.2 484.7 242.1 486.2 247.6 C487.7 253.1 486.2 259.0 488.2 265.2 C490.2 271.4 495.9 278.9 498.0 284.7 C500.1 290.5 501.6 295.3 500.8 300.2 C500.0 305.1 496.9 309.7 493.0 313.9 C489.1 318.1 481.0 321.1 477.4 325.6 C473.8 330.2 472.6 338.6 471.6 341.2"/>
<path d="M330.4 230.0 C331.7 231.6 333.8 237.2 338.0 239.8 C342.2 242.4 351.1 243.1 355.7 245.7 C360.3 248.3 361.9 251.8 365.5 255.4 C369.1 258.9 373.1 264.1 377.0 267.0 C380.9 269.9 386.8 272.0 388.8 273.0"/>
<path d="M9.0 325.6 C10.9 327.6 19.4 333.1 20.7 337.3 C22.0 341.5 16.6 345.2 16.8 351.0 C17.0 356.8 22.5 365.2 22.0 372.0 C21.5 378.8 15.3 388.7 14.0 392.0"/>
<path d="M184.4 467.8 C185.7 467.5 188.6 466.3 192.0 466.0 C195.4 465.7 202.8 466.0 205.0 466.0"/>
</g>
<g fill="none" stroke="#9db5a6" stroke-width=".9" stroke-opacity=".6"><path d="M252.8 242.0 Q239.7 233.9 223.5 236.1"/><path d="M295.8 215.0 Q288.7 221.1 269.6 227.8"/><path d="M268.3 187.7 Q272.9 204.1 274.3 211.7"/><path d="M207.0 207.0 Q227.9 203.2 242.5 197.3"/><path d="M245.5 222.7 Q232.3 222.7 213.8 213.6"/><path d="M239.2 174.5 Q256.6 183.4 275.2 181.9"/><path d="M263.7 201.6 Q275.8 204.4 276.9 208.7"/><path d="M229.7 195.4 Q240.2 191.5 254.4 185.5"/><path d="M208.9 192.7 Q233.8 188.9 250.2 173.3"/><path d="M239.3 196.1 Q265.2 189.7 281.5 181.7"/><path d="M244.4 192.5 Q260.4 187.7 281.6 193.4"/><path d="M280.2 180.4 Q285.3 185.8 292.6 199.7"/><path d="M238.0 246.0 Q236.1 224.3 231.4 213.4"/><path d="M244.1 188.3 Q268.0 195.5 291.9 190.8"/><path d="M243.6 225.1 Q234.4 219.0 232.5 215.1"/><path d="M232.9 200.6 Q231.3 194.1 234.2 176.6"/><path d="M275.5 196.5 Q282.9 208.7 286.8 218.5"/><path d="M212.8 200.4 Q231.6 193.9 252.0 182.2"/><path d="M252.3 235.1 Q234.1 223.1 214.8 222.8"/><path d="M216.6 227.8 Q214.7 214.9 209.6 212.5"/><path d="M225.5 191.9 Q244.6 192.3 258.7 187.1"/><path d="M266.2 213.8 Q264.5 230.6 268.7 248.4"/><path d="M225.2 198.9 Q233.0 194.5 243.9 187.8"/><path d="M240.1 236.3 Q237.1 227.9 232.5 213.9"/><path d="M240.6 231.0 Q227.5 221.3 222.0 213.1"/><path d="M243.9 197.5 Q257.5 192.5 263.2 189.0"/><path d="M264.1 197.5 Q282.2 201.9 291.0 207.4"/><path d="M253.2 228.0 Q246.2 231.6 231.9 227.0"/><path d="M261.4 232.5 Q245.7 232.7 222.6 236.6"/><path d="M269.6 228.7 Q252.5 230.2 239.1 233.8"/><path d="M221.0 224.8 Q220.4 217.2 231.8 198.9"/><path d="M286.2 184.8 Q297.6 196.9 298.7 215.6"/><path d="M248.7 175.2 Q262.7 183.6 281.7 195.8"/><path d="M252.4 225.4 Q243.9 221.3 227.9 228.2"/><path d="M284.6 192.8 Q291.3 214.6 288.4 234.5"/><path d="M293.4 214.9 Q285.1 221.8 272.9 228.0"/><path d="M208.4 232.0 Q211.9 220.8 221.2 200.9"/><path d="M205.9 217.1 Q217.8 212.1 228.8 199.4"/><path d="M271.3 243.5 Q249.1 235.2 219.3 238.8"/><path d="M217.8 185.0 Q227.9 187.4 243.5 189.1"/><path d="M218.7 225.2 Q222.6 210.3 237.2 204.4"/><path d="M262.0 221.6 Q240.0 233.2 228.0 244.9"/><path d="M238.1 233.6 Q225.9 227.2 211.6 224.1"/><path d="M260.9 234.4 Q253.6 236.9 241.2 242.2"/><path d="M270.5 221.0 Q269.0 230.5 260.7 242.9"/><path d="M262.6 181.6 Q271.4 194.0 280.3 201.6"/><path d="M209.7 469.1 Q212.5 466.1 214.4 458.4"/><path d="M239.3 467.2 Q240.8 471.1 231.7 478.0"/><path d="M241.8 452.6 Q237.3 461.5 241.8 462.9"/><path d="M215.1 447.8 Q228.4 449.5 236.1 449.7"/><path d="M239.7 470.3 Q238.3 464.5 230.3 469.7"/><path d="M233.0 465.6 Q222.6 472.3 223.7 470.8"/><path d="M240.7 473.2 Q236.5 476.5 221.4 477.8"/><path d="M227.9 457.1 Q237.7 453.9 242.3 460.0"/><path d="M225.9 445.0 Q230.3 452.7 233.1 452.6"/><path d="M226.5 470.3 Q223.9 470.5 215.2 473.3"/><path d="M216.3 470.5 Q208.6 466.6 210.8 462.6"/><path d="M240.4 460.0 Q238.8 467.6 232.5 469.0"/><path d="M218.5 450.5 Q230.6 445.4 233.2 448.7"/><path d="M241.8 470.7 Q231.1 475.4 221.7 474.8"/><path d="M429.7 208.9 Q422.9 208.0 420.6 213.5"/><path d="M417.2 184.0 Q423.5 189.2 431.8 185.9"/><path d="M414.5 195.1 Q418.2 193.3 422.3 194.3"/><path d="M431.5 209.7 Q421.3 218.3 419.8 215.1"/><path d="M407.8 201.8 Q412.8 196.1 410.1 189.0"/><path d="M406.3 201.8 Q414.8 201.2 417.8 189.5"/><path d="M413.8 201.9 Q413.1 202.9 408.2 192.9"/><path d="M432.1 192.6 Q430.9 197.4 437.2 197.3"/><path d="M438.2 187.0 Q439.5 191.1 445.3 197.0"/><path d="M423.9 193.7 Q426.3 187.8 433.7 185.3"/><path d="M409.0 192.9 Q412.5 191.6 417.6 190.6"/><path d="M429.2 213.3 Q421.4 205.2 412.4 206.3"/><path d="M541.4 368.3 Q539.1 362.1 527.0 365.6"/><path d="M561.6 344.9 Q559.9 356.3 563.1 363.5"/><path d="M530.7 333.3 Q544.7 333.9 547.7 330.4"/><path d="M534.2 348.0 Q538.3 344.6 537.2 337.0"/><path d="M532.9 345.7 Q533.5 343.5 541.9 331.9"/><path d="M538.6 342.4 Q543.8 344.6 553.1 341.5"/><path d="M527.6 340.2 Q534.6 333.2 546.2 334.0"/><path d="M566.7 358.0 Q559.1 360.9 545.8 367.2"/><path d="M543.2 364.3 Q539.2 355.3 535.0 352.2"/><path d="M547.1 336.2 Q553.9 341.5 559.7 340.3"/><path d="M529.4 366.5 Q524.7 355.8 529.5 354.3"/><path d="M549.4 331.0 Q551.6 339.5 555.7 342.1"/><path d="M128.8 314.0 Q129.1 317.4 131.8 328.2"/><path d="M101.1 327.4 Q109.1 318.8 110.4 321.5"/><path d="M127.8 312.1 Q132.8 322.2 136.7 330.3"/><path d="M103.5 315.3 Q118.4 316.7 124.8 318.5"/><path d="M102.7 319.8 Q108.6 316.7 110.7 313.8"/><path d="M102.7 327.9 Q99.2 323.5 106.8 319.1"/><path d="M109.6 319.1 Q123.1 310.8 127.2 311.2"/><path d="M125.3 314.5 Q125.3 312.7 131.8 321.0"/></g>
<g fill="none" stroke="#8fc7d6" stroke-width="1.3" stroke-dasharray="2 3" stroke-opacity=".8">
<path d="M472.0 220.0 C474.5 218.8 479.0 215.5 487.0 213.0 C495.0 210.5 510.3 207.2 520.0 205.0 C529.7 202.8 537.5 202.5 545.0 200.0 C552.5 197.5 561.7 191.7 565.0 190.0"/>
<path d="M475.5 384.0 C476.5 389.8 479.7 409.2 481.3 419.0 C482.9 428.8 484.6 438.6 485.2 442.5"/>
<path d="M466.0 252.0 C464.2 255.8 457.7 267.0 455.0 275.0 C452.3 283.0 450.8 295.8 450.0 300.0"/>
</g>
<path transform="translate(164.3 298.4) scale(0.95)" d="M0-4.2 C.7-4.2 .8-3 .8-2 L.8-.8 L4.2 1.4 L4.2 2.3 L.8 1.2 L.6 3.1 L1.8 4 L1.8 4.6 L0 4.1 L-1.8 4.6 L-1.8 4 L-.6 3.1 L-.8 1.2 L-4.2 2.3 L-4.2 1.4 L-.8-.8 L-.8-2 C-.8-3-.7-4.2 0-4.2Z" fill="#5a9fd0"/>
<path transform="translate(222.4 374.5) scale(0.85)" d="M0-4.2 C.7-4.2 .8-3 .8-2 L.8-.8 L4.2 1.4 L4.2 2.3 L.8 1.2 L.6 3.1 L1.8 4 L1.8 4.6 L0 4.1 L-1.8 4.6 L-1.8 4 L-.6 3.1 L-.8 1.2 L-4.2 2.3 L-4.2 1.4 L-.8-.8 L-.8-2 C-.8-3-.7-4.2 0-4.2Z" fill="#5a9fd0"/>
<path transform="translate(184 486) scale(0.9)" d="M0-4.2 C.7-4.2 .8-3 .8-2 L.8-.8 L4.2 1.4 L4.2 2.3 L.8 1.2 L.6 3.1 L1.8 4 L1.8 4.6 L0 4.1 L-1.8 4.6 L-1.8 4 L-.6 3.1 L-.8 1.2 L-4.2 2.3 L-4.2 1.4 L-.8-.8 L-.8-2 C-.8-3-.7-4.2 0-4.2Z" fill="#5a9fd0"/>
<g filter="url(#bl2)"><ellipse cx="174" cy="166" rx="9" ry="9" fill="#a9ecd9" opacity=".75"/><ellipse cx="150" cy="179" rx="12" ry="5" fill="#a9ecd9" opacity=".75"/><ellipse cx="248" cy="217" rx="13" ry="9" fill="#a9ecd9" opacity=".75"/><ellipse cx="90" cy="250" rx="8" ry="7" fill="#a9ecd9" opacity=".75"/><ellipse cx="116" cy="268" rx="11" ry="10" fill="#a9ecd9" opacity=".75"/><ellipse cx="256" cy="283" rx="9" ry="8" fill="#a9ecd9" opacity=".75"/><ellipse cx="326" cy="282" rx="12" ry="9" fill="#a9ecd9" opacity=".75"/><ellipse cx="315" cy="326" rx="13" ry="7" fill="#a9ecd9" opacity=".75"/><ellipse cx="166" cy="343" rx="11" ry="6" fill="#a9ecd9" opacity=".75"/><ellipse cx="238" cy="349" rx="11" ry="9" fill="#a9ecd9" opacity=".75"/><ellipse cx="333" cy="361" rx="11" ry="9" fill="#a9ecd9" opacity=".75"/><ellipse cx="94" cy="396" rx="8" ry="9" fill="#a9ecd9" opacity=".75"/><ellipse cx="450" cy="170" rx="13" ry="10" fill="#a9ecd9" opacity=".75"/><ellipse cx="527" cy="174" rx="10" ry="9" fill="#a9ecd9" opacity=".75"/><ellipse cx="593" cy="163" rx="9" ry="10" fill="#a9ecd9" opacity=".75"/><ellipse cx="492" cy="191" rx="12" ry="7" fill="#a9ecd9" opacity=".75"/><ellipse cx="558" cy="200" rx="7" ry="7" fill="#a9ecd9" opacity=".75"/><ellipse cx="352" cy="190" rx="10" ry="9" fill="#a9ecd9" opacity=".75"/><ellipse cx="405" cy="200" rx="10" ry="5" fill="#a9ecd9" opacity=".75"/><ellipse cx="346" cy="207" rx="12" ry="5" fill="#a9ecd9" opacity=".75"/><ellipse cx="450" cy="253" rx="12" ry="6" fill="#a9ecd9" opacity=".75"/><ellipse cx="358" cy="264" rx="9" ry="9" fill="#a9ecd9" opacity=".75"/><ellipse cx="444" cy="294" rx="8" ry="6" fill="#a9ecd9" opacity=".75"/><ellipse cx="384" cy="323" rx="10" ry="9" fill="#a9ecd9" opacity=".75"/><ellipse cx="583" cy="342" rx="12" ry="8" fill="#a9ecd9" opacity=".75"/><ellipse cx="561" cy="368" rx="13" ry="7" fill="#a9ecd9" opacity=".75"/><ellipse cx="428" cy="378" rx="13" ry="5" fill="#a9ecd9" opacity=".75"/><ellipse cx="63" cy="418" rx="8" ry="8" fill="#a9ecd9" opacity=".75"/><ellipse cx="115" cy="425" rx="9" ry="9" fill="#a9ecd9" opacity=".75"/><ellipse cx="289" cy="407" rx="11" ry="8" fill="#a9ecd9" opacity=".75"/><ellipse cx="181" cy="438" rx="12" ry="8" fill="#a9ecd9" opacity=".75"/><ellipse cx="352" cy="450" rx="9" ry="7" fill="#a9ecd9" opacity=".75"/><ellipse cx="227" cy="474" rx="12" ry="10" fill="#a9ecd9" opacity=".75"/><ellipse cx="114" cy="505" rx="8" ry="9" fill="#a9ecd9" opacity=".75"/><ellipse cx="290" cy="517" rx="13" ry="8" fill="#a9ecd9" opacity=".75"/><ellipse cx="256" cy="534" rx="10" ry="6" fill="#a9ecd9" opacity=".75"/><ellipse cx="192" cy="547" rx="10" ry="8" fill="#a9ecd9" opacity=".75"/><ellipse cx="108" cy="561" rx="11" ry="5" fill="#a9ecd9" opacity=".75"/><ellipse cx="116" cy="601" rx="13" ry="8" fill="#a9ecd9" opacity=".75"/><ellipse cx="512" cy="423" rx="9" ry="9" fill="#a9ecd9" opacity=".75"/><ellipse cx="413" cy="478" rx="10" ry="7" fill="#a9ecd9" opacity=".75"/><ellipse cx="559" cy="499" rx="11" ry="5" fill="#a9ecd9" opacity=".75"/><ellipse cx="481" cy="525" rx="10" ry="7" fill="#a9ecd9" opacity=".75"/><ellipse cx="456" cy="542" rx="13" ry="10" fill="#a9ecd9" opacity=".75"/><ellipse cx="584" cy="562" rx="9" ry="7" fill="#a9ecd9" opacity=".75"/><ellipse cx="466" cy="610" rx="8" ry="7" fill="#a9ecd9" opacity=".75"/><ellipse cx="688" cy="602" rx="12" ry="10" fill="#a9ecd9" opacity=".75"/></g>
<g fill="none" stroke="#a9d9c3" stroke-width="1" stroke-opacity=".85"><path d="M173.9 165.7 Q160.9 173.3 149.6 178.8"/><path d="M173.9 165.7 Q169.6 207.2 150.0 250.0"/><path d="M173.9 165.7 Q210.9 193.0 247.7 217.2"/><path d="M149.6 178.8 Q144.1 214.6 150.0 250.0"/><path d="M149.6 178.8 Q122.0 219.5 89.7 249.6"/><path d="M247.7 217.2 Q244.8 246.5 256.5 282.9"/><path d="M247.7 217.2 Q266.5 264.2 300.0 300.0"/><path d="M89.7 249.6 Q106.4 250.6 116.2 268.0"/><path d="M89.7 249.6 Q128.5 258.2 150.0 250.0"/><path d="M89.7 249.6 Q67.6 226.9 40.0 200.0"/><path d="M116.2 268.0 Q126.9 250.3 150.0 250.0"/><path d="M116.2 268.0 Q88.6 291.1 60.0 330.0"/><path d="M256.5 282.9 Q272.7 286.8 300.0 300.0"/><path d="M256.5 282.9 Q238.6 315.3 237.6 348.9"/><path d="M326.5 282.5 Q312.2 297.4 300.0 300.0"/><path d="M326.5 282.5 Q342.8 275.9 358.5 264.3"/><path d="M326.5 282.5 Q320.9 307.2 315.4 326.1"/><path d="M315.4 326.1 Q306.9 309.1 300.0 300.0"/><path d="M315.4 326.1 Q333.2 352.7 333.0 361.4"/><path d="M166.3 343.0 Q208.1 349.7 237.6 348.9"/><path d="M166.3 343.0 Q126.8 364.8 94.0 396.3"/><path d="M166.3 343.0 Q137.5 297.8 116.2 268.0"/><path d="M237.6 348.9 Q268.3 376.0 289.4 406.6"/><path d="M333.0 361.4 Q337.7 378.7 330.0 400.0"/><path d="M333.0 361.4 Q319.4 390.3 289.4 406.6"/><path d="M94.0 396.3 Q95.5 405.4 115.0 425.0"/><path d="M94.0 396.3 Q86.0 406.4 63.2 417.5"/><path d="M94.0 396.3 Q95.6 421.3 80.0 450.0"/><path d="M450.5 170.5 Q442.6 187.6 450.0 200.0"/><path d="M450.5 170.5 Q476.3 176.8 492.1 191.3"/><path d="M450.5 170.5 Q420.3 182.4 405.0 200.4"/><path d="M527.2 173.9 Q518.0 187.2 492.1 191.3"/><path d="M527.2 173.9 Q535.9 182.3 558.4 199.9"/><path d="M527.2 173.9 Q506.4 189.0 500.0 220.0"/><path d="M593.4 163.3 Q581.2 175.8 558.4 199.9"/><path d="M593.4 163.3 Q561.4 167.7 527.2 173.9"/><path d="M593.4 163.3 Q601.1 200.8 620.0 230.0"/><path d="M492.1 191.3 Q489.4 208.2 500.0 220.0"/><path d="M492.1 191.3 Q464.1 194.2 450.0 200.0"/><path d="M558.4 199.9 Q544.0 220.8 540.0 250.0"/><path d="M351.5 189.7 Q357.5 204.0 346.5 207.3"/><path d="M351.5 189.7 Q374.7 202.0 405.0 200.4"/><path d="M351.5 189.7 Q349.8 225.1 358.5 264.3"/><path d="M405.0 200.4 Q433.9 202.8 450.0 200.0"/><path d="M346.5 207.3 Q345.3 244.6 358.5 264.3"/><path d="M346.5 207.3 Q370.6 199.5 405.0 200.4"/><path d="M450.0 252.9 Q452.2 270.6 444.5 294.5"/><path d="M450.0 252.9 Q446.3 218.8 450.0 200.0"/><path d="M450.0 252.9 Q467.6 237.9 500.0 220.0"/><path d="M358.5 264.3 Q366.7 295.3 384.2 322.6"/><path d="M444.5 294.5 Q412.0 307.7 384.2 322.6"/><path d="M444.5 294.5 Q490.5 297.0 520.0 300.0"/><path d="M384.2 322.6 Q359.9 348.6 333.0 361.4"/><path d="M583.0 341.5 Q566.3 348.3 561.0 367.5"/><path d="M583.0 341.5 Q588.9 316.5 580.0 280.0"/><path d="M583.0 341.5 Q547.0 315.2 520.0 300.0"/><path d="M561.0 367.5 Q584.8 401.7 600.0 420.0"/><path d="M561.0 367.5 Q530.8 403.5 511.6 423.3"/><path d="M428.4 377.7 Q421.1 400.7 400.0 420.0"/><path d="M428.4 377.7 Q404.9 343.0 384.2 322.6"/><path d="M428.4 377.7 Q428.1 344.4 444.5 294.5"/><path d="M63.2 417.5 Q41.9 422.4 30.0 420.0"/><path d="M63.2 417.5 Q67.2 439.6 80.0 450.0"/><path d="M115.0 425.0 Q99.2 433.8 80.0 450.0"/><path d="M115.0 425.0 Q83.3 425.2 63.2 417.5"/><path d="M289.4 406.6 Q301.9 398.4 330.0 400.0"/><path d="M289.4 406.6 Q321.5 434.9 351.5 450.5"/><path d="M181.4 438.5 Q206.1 452.1 226.7 473.6"/><path d="M181.4 438.5 Q155.7 426.4 115.0 425.0"/><path d="M181.4 438.5 Q138.8 467.7 113.7 505.2"/><path d="M351.5 450.5 Q354.8 467.3 360.0 500.0"/><path d="M351.5 450.5 Q334.9 422.9 330.0 400.0"/><path d="M351.5 450.5 Q377.0 428.6 400.0 420.0"/><path d="M226.7 473.6 Q238.9 510.7 256.0 533.7"/><path d="M226.7 473.6 Q266.9 498.3 289.9 517.3"/><path d="M113.7 505.2 Q114.2 534.5 107.9 560.8"/><path d="M113.7 505.2 Q90.4 469.2 80.0 450.0"/><path d="M113.7 505.2 Q105.7 472.5 115.0 425.0"/><path d="M289.9 517.3 Q276.6 533.8 256.0 533.7"/><path d="M289.9 517.3 Q281.3 541.1 290.0 560.0"/><path d="M289.9 517.3 Q324.6 512.8 360.0 500.0"/><path d="M256.0 533.7 Q269.7 555.8 290.0 560.0"/><path d="M256.0 533.7 Q245.4 562.7 250.0 590.0"/><path d="M191.6 547.1 Q200.1 580.8 200.0 600.0"/><path d="M191.6 547.1 Q228.1 544.1 256.0 533.7"/><path d="M191.6 547.1 Q226.1 576.0 250.0 590.0"/><path d="M107.9 560.8 Q109.1 584.1 115.7 600.7"/><path d="M107.9 560.8 Q91.2 587.1 60.0 600.0"/><path d="M115.7 600.7 Q86.4 605.6 60.0 600.0"/><path d="M115.7 600.7 Q164.4 601.7 200.0 600.0"/><path d="M511.6 423.3 Q498.0 434.5 480.0 450.0"/><path d="M511.6 423.3 Q557.3 423.6 600.0 420.0"/><path d="M413.3 478.4 Q379.1 491.7 360.0 500.0"/><path d="M413.3 478.4 Q415.5 456.0 400.0 420.0"/><path d="M413.3 478.4 Q386.5 462.4 351.5 450.5"/><path d="M559.1 499.2 Q575.6 532.0 583.6 561.8"/><path d="M559.1 499.2 Q518.9 518.0 480.9 524.7"/><path d="M559.1 499.2 Q592.1 514.1 640.0 520.0"/><path d="M480.9 524.7 Q460.2 535.2 456.5 542.1"/><path d="M480.9 524.7 Q500.1 547.5 520.0 580.0"/><path d="M480.9 524.7 Q454.0 542.3 420.0 560.0"/><path d="M456.5 542.1 Q440.3 558.6 420.0 560.0"/><path d="M456.5 542.1 Q456.9 567.5 466.1 610.5"/><path d="M583.6 561.8 Q593.2 584.1 610.0 600.0"/><path d="M583.6 561.8 Q546.4 565.0 520.0 580.0"/><path d="M466.1 610.5 Q500.4 598.1 520.0 580.0"/><path d="M466.1 610.5 Q442.0 592.3 420.0 560.0"/><path d="M688.0 602.0 Q645.9 604.0 610.0 600.0"/><path d="M688.0 602.0 Q658.6 559.8 640.0 520.0"/><path d="M688.0 602.0 Q641.3 589.4 583.6 561.8"/><path d="M40.0 200.0 Q84.9 231.9 116.2 268.0"/><path d="M40.0 200.0 Q96.3 186.1 149.6 178.8"/><path d="M60.0 330.0 Q70.5 363.1 94.0 396.3"/><path d="M60.0 330.0 Q80.9 296.1 89.7 249.6"/><path d="M30.0 420.0 Q58.8 443.1 80.0 450.0"/><path d="M30.0 420.0 Q58.0 402.2 94.0 396.3"/><path d="M290.0 560.0 Q269.1 571.0 250.0 590.0"/><path d="M520.0 300.0 Q524.9 273.5 540.0 250.0"/><path d="M520.0 300.0 Q552.3 289.9 580.0 280.0"/><path d="M620.0 230.0 Q596.7 261.1 580.0 280.0"/><path d="M620.0 230.0 Q597.9 214.1 558.4 199.9"/><path d="M650.0 300.0 Q607.3 281.6 580.0 280.0"/><path d="M650.0 300.0 Q641.7 256.7 620.0 230.0"/><path d="M650.0 300.0 Q620.3 322.0 583.0 341.5"/><path d="M600.0 420.0 Q616.6 430.2 640.0 430.0"/><path d="M600.0 420.0 Q582.8 374.2 583.0 341.5"/><path d="M640.0 520.0 Q611.0 532.3 583.6 561.8"/><path d="M640.0 520.0 Q630.9 555.3 610.0 600.0"/><path d="M250.0 590.0 Q218.5 586.8 200.0 600.0"/><path d="M480.0 450.0 Q449.0 463.2 413.3 478.4"/><path d="M480.0 450.0 Q482.8 490.1 480.9 524.7"/><path d="M540.0 250.0 Q565.5 273.3 580.0 280.0"/><path d="M540.0 250.0 Q523.3 229.6 500.0 220.0"/><path d="M640.0 430.0 Q639.6 469.2 640.0 520.0"/><path d="M640.0 430.0 Q591.7 398.2 561.0 367.5"/><path d="M330.0 600.0 Q313.9 574.2 290.0 560.0"/><path d="M330.0 600.0 Q285.9 592.2 250.0 590.0"/><path d="M330.0 600.0 Q313.5 559.0 289.9 517.3"/><path d="M60.0 600.0 Q88.9 557.2 113.7 505.2"/></g>
<g font-family="DejaVu Sans, sans-serif" fill="#434343" text-anchor="middle" stroke="#fff" stroke-opacity=".55" stroke-width="1.7" paint-order="stroke" stroke-linejoin="round">
<text x="173.9" y="162.8" font-size="8.75">Steinbach</text>
<text x="149.6" y="176.0" font-size="8.75">Schwalbach</text>
<text x="149.6" y="187.8" font-size="8.75">am Taunus</text>
<text x="247.7" y="215.3" font-size="11.3">Frankfurt am</text>
<text x="247.7" y="230.5" font-size="11.3">Main</text>
<text x="89.7" y="246.8" font-size="8.75">Hofheim</text>
<text x="116.2" y="265.1" font-size="8.75">Hattersheim</text>
<text x="256.5" y="280.0" font-size="8.75">Neu-Isenburg</text>
<text x="326.5" y="279.6" font-size="8.75">Heusenstamm</text>
<text x="315.4" y="323.2" font-size="8.75">Dietzenbach</text>
<text x="166.3" y="340.1" font-size="8.75">Mörfelden-</text>
<text x="167.3" y="351.5" font-size="8.75">Walldorf</text>
<text x="237.6" y="346.0" font-size="8.75">Langen (Hessen)</text>
<text x="333" y="358.5" font-size="8.75">Rödermark</text>
<text x="94" y="393.4" font-size="8.75">Nauheim</text>
<text x="450.5" y="167.7" font-size="8.75">Erlensee</text>
<text x="527.2" y="171.1" font-size="8.75">Hasselroth</text>
<text x="593.4" y="160.5" font-size="8.75">Linsengericht</text>
<text x="492.1" y="188.5" font-size="8.75">Rodenbach</text>
<text x="558.4" y="197.1" font-size="8.75">Freigericht</text>
<text x="351.5" y="186.8" font-size="8.75">Maintal</text>
<text x="405" y="197.6" font-size="8.75">Hanau</text>
<text x="346.5" y="204.5" font-size="8.75">Mühlheim</text>
<text x="346.5" y="216.0" font-size="8.75">am Main</text>
<text x="450" y="250.1" font-size="8.75">Großkrotzenburg</text>
<text x="358.5" y="261.4" font-size="8.75">Obertshausen</text>
<text x="444.5" y="291.6" font-size="8.75">Seligenstadt</text>
<text x="384.2" y="319.8" font-size="8.75">Rodgau</text>
<text x="583" y="338.6" font-size="8.75">Goldbach</text>
<text x="561" y="364.6" font-size="8.75">Aschaffenburg</text>
<text x="428.4" y="374.8" font-size="8.75">Babenhausen</text>
<text x="63.2" y="414.6" font-size="8.75">Trebur</text>
<text x="115" y="422.1" font-size="8.75">Groß-Gerau</text>
<text x="289.4" y="403.8" font-size="8.75">Messel</text>
<text x="181.4" y="435.6" font-size="8.75">Weiterstadt</text>
<text x="351.5" y="447.6" font-size="8.75">Dieburg</text>
<text x="226.7" y="471.7" font-size="11.3">Darmstadt</text>
<text x="113.7" y="502.3" font-size="8.75">Riedstadt</text>
<text x="289.9" y="514.5" font-size="8.75">Ober-Ramstadt</text>
<text x="256" y="530.9" font-size="8.75">Mühltal</text>
<text x="191.6" y="544.2" font-size="8.75">Pfungstadt</text>
<text x="107.9" y="557.9" font-size="8.75">Biebesheim</text>
<text x="107.9" y="569.2" font-size="8.75">am Rhein</text>
<text x="115.7" y="597.9" font-size="8.75">Gernsheim</text>
<text x="511.6" y="420.4" font-size="8.75">Großostheim</text>
<text x="413.3" y="475.5" font-size="8.75">Groß-Umstadt</text>
<text x="559.1" y="496.3" font-size="8.75">Obernburg</text>
<text x="559.1" y="507.5" font-size="8.75">am Main</text>
<text x="480.9" y="521.9" font-size="8.75">Breuberg</text>
<text x="456.5" y="539.2" font-size="8.75">Höchst im</text>
<text x="456.5" y="550.9" font-size="8.75">Odenwald</text>
<text x="583.6" y="558.9" font-size="8.75">Klingenberg</text>
<text x="583.6" y="570.6" font-size="8.75">am Main</text>
<text x="466.1" y="607.6" font-size="8.75">Bad König</text>
<text x="688" y="599.1" font-size="8.75">Freudenberg</text>
</g>
<g font-family="DejaVu Sans, sans-serif" fill="#434343" stroke="#fff" stroke-opacity=".55" stroke-width="1.7" paint-order="stroke" font-size="8.75">
<text x="34.5" y="169" text-anchor="end">hausen</text>
<text x="73" y="191.3" text-anchor="end">Eppstein</text>
<text x="35" y="472.2" text-anchor="end">Nierstein</text>
<text x="53.5" y="491.8" text-anchor="end">Oppenheim</text>
<text x="96" y="315" text-anchor="end">im</text>
<text x="96" y="326.4" text-anchor="end">in</text>
<clipPath id="rc"><rect x="9" y="325" width="73" height="30"/></clipPath><g clip-path="url(#rc)"><text x="37.5" y="337.2">Rüsselsheim</text><text x="46" y="349">am Main</text></g>
</g>
<g font-family="DejaVu Sans, sans-serif" font-style="italic" fill="#8461c4" stroke="#fff" stroke-opacity=".45" stroke-width="1.4" paint-order="stroke" font-size="8.4" text-anchor="middle">
<text x="221.9" y="391.0">Flugplatz</text>
<text x="221.9" y="402.6">Frankfurt-</text>
<text x="221.9" y="413.0">Egelsbach</text>
<text x="184.5" y="503.0">August</text>
<text x="184.5" y="513.8">Euler Flugplatz</text>
<text x="28.5" y="299.8" text-anchor="end">Wiesbaden</text>
<text x="26.5" y="310.3" text-anchor="end">Army Air</text>
<text x="18.5" y="321" text-anchor="end">Field</text>
</g>
<rect x="684.9" y="156" width=".8" height="457" fill="#9fb8b0" opacity=".8"/><rect x="9" y="156" width="677" height="1" fill="#8fb5a6" opacity=".45"/>
</svg>
<!-- zoom control -->
<div class="a" style="left:17.4px;top:164.4px;width:23.4px;height:44.2px;background:rgba(255,255,255,.4);border-radius:4px"></div>
<div class="a" style="left:19.1px;top:166.1px;width:20.2px;height:20.2px;background:#5b8abd;border-radius:2px 2px 0 0"></div>
<div class="a" style="left:19.1px;top:187.2px;width:20.2px;height:19.6px;background:#5b8abd;border-radius:0 0 2px 2px"></div>
<div class="a" style="left:25px;top:173.9px;width:8.2px;height:2.3px;background:#fff"></div><div class="a" style="left:27.95px;top:170.9px;width:2.3px;height:8.2px;background:#fff"></div>
<div class="a" style="left:25px;top:195.3px;width:8.2px;height:2.3px;background:#fff"></div>
<!-- O / L -->
<div class="a" style="left:17px;top:514.5px;width:24.4px;height:24.4px;background:rgba(255,255,255,.4);border-radius:4px"></div>
<div class="a" style="left:19.1px;top:516.6px;width:20.2px;height:20.2px;background:#5b8abd;border-radius:2px"></div>
<div class="t b" style="left:19.1px;top:518.9px;width:20.2px;text-align:center;font-size:15.6px;color:#fff">O</div>
<div class="a" style="left:17px;top:548.6px;width:24.4px;height:24.4px;background:rgba(255,255,255,.4);border-radius:4px"></div>
<div class="a" style="left:19.1px;top:550.7px;width:20.2px;height:20.2px;background:#5b8abd;border-radius:2px"></div>
<div class="t b" style="left:19.1px;top:552.9px;width:20.2px;text-align:center;font-size:15.8px;color:#fff">L</div>
<!-- scale line -->
<div class="a" style="left:17.2px;top:586.7px;width:99.4px;height:18.6px;background:rgba(40,110,150,.42);border-radius:4px"></div>
<div class="a" style="left:20.3px;top:589px;width:94px;height:14px;border:1px solid rgba(255,255,255,.5);border-top:0"></div>
<div class="t b" style="left:20.3px;top:591.4px;width:94px;text-align:center;font-size:8.5px;color:#e6f1f1">10 km</div>
<!-- layer switch -->
<div class="a" style="left:638.7px;top:163.6px;width:39.6px;height:39.4px;background:rgba(255,255,255,.4);border-radius:4px"></div>
<div class="a" style="left:640.8px;top:165.7px;width:35.5px;height:35.2px;background:#5f95c2;border-radius:2px"></div>
<svg class="a" style="left:640.8px;top:165.7px" width="35.5" height="35.2" viewBox="0 0 35.5 35.2"><defs><linearGradient id="lg" x1="0" y1="0" x2="1" y2="1"><stop offset="0" stop-color="#6fcfe0"/><stop offset="1" stop-color="#3cc2cd"/></linearGradient></defs><path d="M17.75 5.9 Q20 5.5 22 7.3 L28.3 13.6 Q30.2 16 28.3 18.4 L22 24.7 Q17.75 28 13.5 24.7 L7.2 18.4 Q5.3 16 7.2 13.6 L13.5 7.3 Q15.5 5.5 17.75 5.9Z" transform="translate(0 2.6)" fill="#2c5873" opacity=".65"/><path d="M17.75 5.9 Q20 5.5 22 7.3 L28.3 13.6 Q30.2 16 28.3 18.4 L22 24.7 Q17.75 28 13.5 24.7 L7.2 18.4 Q5.3 16 7.2 13.6 L13.5 7.3 Q15.5 5.5 17.75 5.9Z" transform="translate(0 1.5)" fill="#e4f6f8"/><path d="M17.75 5.9 Q20 5.5 22 7.3 L28.3 13.6 Q30.2 16 28.3 18.4 L22 24.7 Q17.75 28 13.5 24.7 L7.2 18.4 Q5.3 16 7.2 13.6 L13.5 7.3 Q15.5 5.5 17.75 5.9Z" fill="url(#lg)"/></svg>
<!-- info -->
<div class="a" style="left:652.7px;top:581.7px;width:25.2px;height:24.3px;background:rgba(255,255,255,.4);border-radius:4px"></div>
<div class="a" style="left:654.8px;top:583.8px;width:21.1px;height:20.1px;background:#5b8abd;border-radius:2px"></div>
<div class="t b" style="left:654.8px;top:585.3px;width:21.1px;text-align:center;font-size:17px;color:#fff">i</div>
<!-- address row -->
<div class="a" style="left:9px;top:613px;width:677px;height:31px;background:#fff"></div>
<div class="t" style="left:19px;top:620.5px;font-size:11.5px;color:#222">Address:</div>
<div class="inp" style="left:87.2px;top:619.6px;width:158.6px;height:19.2px"></div>
<div class="t" style="left:87.2px;top:622.3px;width:155.6px;text-align:right;font-size:11.5px;color:#a3a3a3">Eg.Ispra, Italy</div>
<div class="btn" style="left:249px;top:619.2px;width:43px;height:19.6px;font-size:11.5px;line-height:18px">Go!</div>
<div class="t" style="left:353.5px;top:620.8px;font-size:11.5px;color:#222">Lat/Lon:</div>
<div class="inp" style="left:445.3px;top:619.6px;width:65.6px;height:18.8px"></div>
<div class="t" style="left:445.3px;top:622.3px;width:62.6px;text-align:right;font-size:11.5px;color:#a3a3a3">Eg. 45.815</div>
<div class="inp" style="left:514.7px;top:619.6px;width:64.6px;height:18.8px"></div>
<div class="t" style="left:514.7px;top:622.3px;width:62px;text-align:right;font-size:11.5px;color:#a3a3a3">Eg. 8.611</div>
<div class="btn" style="left:582.3px;top:619.2px;width:43.7px;height:19.4px;font-size:11.5px;line-height:18px">Go!</div>
<!--MAP-E-->

<!-- INFO PANEL -->
<!--INFO-S--><div class="panel" style="left:694.3px;top:155.3px;width:678.3px;height:96px"></div>
<div class="t b" style="left:705.7px;top:163px;font-size:11.5px;color:#111">Cursor:</div>
<div class="t b" style="left:705.7px;top:186.1px;font-size:11.5px;color:#111">Selected:</div>
<div class="t b" style="left:796.9px;top:186.1px;font-size:11.5px;color:#111">49.654, 8.570</div>
<div class="t" style="left:705.7px;top:203.6px;font-size:11.5px;color:#222">Elevation (m):</div>
<div class="t" style="left:796.9px;top:203.6px;font-size:11.5px;color:#222">104</div>
<div class="t" style="left:705.7px;top:227px;font-size:11.5px;color:#222">PVGIS ver.</div>
<div class="t b" style="left:796.9px;top:227px;font-size:11.5px;color:#111">5.2</div>
<div class="t b" style="left:928px;top:163px;font-size:11.5px;color:#111">Use terrain shadows:</div>
<svg class="a" style="left:930.6px;top:181.6px" width="11.4" height="11.4" viewBox="0 0 12 12"><rect width="12" height="12" rx="2" fill="#1a73e8"/><path d="M2.6 6.2 L5 8.6 L9.6 3.4" fill="none" stroke="#fff" stroke-width="1.7"/></svg>
<div class="t" style="left:946.5px;top:181.5px;font-size:11.5px;color:#8a8a8a">Calculated horizon</div>
<div class="a" style="left:930.8px;top:204.6px;width:11.2px;height:11.2px;border:1px solid #767676;border-radius:2.5px;background:#fff"></div>
<div class="t" style="left:942.7px;top:204px;font-size:11.5px;color:#8a8a8a">Upload horizon file</div>
<div class="a" style="left:930.8px;top:225.4px;width:113px;height:19.5px;background:#0f7f12;border-radius:3px"></div>
<div class="t" style="left:930.8px;top:229.8px;width:113px;text-align:center;font-size:11px;color:#fff">Switch to version 5.1</div>
<div class="btn" style="left:1114px;top:179.2px;width:71px;height:19.6px"></div>
<svg class="a dl" style="left:1133.4px;top:183.3px" width="10.8" height="10.8" viewBox="0 0 12 12"><path d="M4.3 0h3.4v4.4h2.6L6 8.8 1.7 4.4h2.6zM0 9.3h12V12H0z" fill="#fff"/></svg>
<div class="t" style="left:1147.5px;top:183.2px;font-size:11px;color:#fff">csv</div>
<div class="btn" style="left:1199.2px;top:179.2px;width:70px;height:19.6px"></div>
<svg class="a dl" style="left:1216.4px;top:183.3px" width="10.8" height="10.8" viewBox="0 0 12 12"><path d="M4.3 0h3.4v4.4h2.6L6 8.8 1.7 4.4h2.6zM0 9.3h12V12H0z" fill="#fff"/></svg>
<div class="t" style="left:1230.5px;top:183.2px;font-size:11px;color:#fff">json</div>
<div class="a" style="left:1114px;top:201.8px;width:100px;height:19.2px;background:#efefef;border:1px solid #e2e2e2;border-radius:3px"></div>
<div class="t" style="left:1114px;top:205.4px;width:100px;text-align:center;font-size:11.5px;color:#b4b4b4">Datei auswählen</div>
<div class="t" style="left:1218.3px;top:205.4px;font-size:11.5px;color:#111">Keine ausgewählt</div>
<!--INFO-E-->

<!-- FORM PANEL -->
<!--FORM-S--><div class="panel" style="left:694.3px;top:259.4px;width:678.3px;height:338.6px"></div>
<div class="a" style="left:1355.2px;top:260.4px;width:16.6px;height:336.6px;background:#f1f1f1"></div>
<div class="a" style="left:1359.4px;top:266.3px;width:0;height:0;border-left:4.2px solid transparent;border-right:4.2px solid transparent;border-bottom:4.6px solid #a9a9a9"></div>
<div class="a" style="left:1359.4px;top:585px;width:0;height:0;border-left:4.2px solid transparent;border-right:4.2px solid transparent;border-top:4.6px solid #a9a9a9"></div>
<div class="a" style="left:695.3px;top:260.4px;width:4.2px;height:30.8px;background:#e2e2e2"></div>
<div class="a" style="left:699.5px;top:291px;width:111.8px;height:206px;border-top:1px solid #e3e3e3;border-right:1px solid #e3e3e3"></div>
<div class="t" style="left:720.8px;top:271.3px;font-size:8.3px;color:#555">GRID CONNECTED</div>
<div class="a" style="left:694.5px;top:293.5px;width:4.8px;height:31.5px;background:#f08c44;border-radius:2.5px"></div>
<div class="t" style="left:720.8px;top:305.3px;font-size:8.3px;color:#406a90">TRACKING PV</div>
<div class="a" style="left:694.5px;top:328.3px;width:4.8px;height:30.9px;background:#f08c44;border-radius:2.5px"></div>
<div class="t" style="left:720.8px;top:339.4px;font-size:8.3px;color:#406a90">OFF-GRID</div>
<div class="a" style="left:694.5px;top:363px;width:4.8px;height:30.3px;background:#766aa8;border-radius:2.5px"></div>
<div class="t" style="left:720.8px;top:372.8px;font-size:8.3px;color:#406a90">MONTHLY DATA</div>
<div class="a" style="left:694.5px;top:396.6px;width:4.8px;height:30.4px;background:#766aa8;border-radius:2.5px"></div>
<div class="t" style="left:720.8px;top:406.9px;font-size:8.3px;color:#406a90">DAILY DATA</div>
<div class="a" style="left:694.5px;top:430.7px;width:4.8px;height:30.3px;background:#766aa8;border-radius:2.5px"></div>
<div class="t" style="left:720.8px;top:441.0px;font-size:8.3px;color:#406a90">HOURLY DATA</div>
<div class="a" style="left:694.5px;top:464.8px;width:4.8px;height:30.2px;background:#3d9d58;border-radius:2.5px"></div>
<div class="t" style="left:720.8px;top:475.1px;font-size:8.3px;color:#406a90">TMY</div>
<div class="a" style="left:831.2px;top:259.9px;width:521.7px;height:36.8px;background:#fd8b3b"></div>
<svg class="a" style="left:845.4px;top:268.4px" width="21" height="22" viewBox="0 0 21 22"><g fill="#fff"><rect x="1" y="1" width="15.2" height="19.2" rx="1.6" fill="#ffd9bd"/><rect x="2.0" y="2.00" width="2.6" height="2.3"/><rect x="5.4" y="2.00" width="2.6" height="2.3"/><rect x="8.8" y="2.00" width="2.6" height="2.3"/><rect x="12.2" y="2.00" width="2.6" height="2.3"/><rect x="2.0" y="5.05" width="2.6" height="2.3"/><rect x="5.4" y="5.05" width="2.6" height="2.3"/><rect x="8.8" y="5.05" width="2.6" height="2.3"/><rect x="12.2" y="5.05" width="2.6" height="2.3"/><rect x="2.0" y="8.10" width="2.6" height="2.3"/><rect x="5.4" y="8.10" width="2.6" height="2.3"/><rect x="8.8" y="8.10" width="2.6" height="2.3"/><rect x="12.2" y="8.10" width="2.6" height="2.3"/><rect x="2.0" y="11.15" width="2.6" height="2.3"/><rect x="5.4" y="11.15" width="2.6" height="2.3"/><rect x="8.8" y="11.15" width="2.6" height="2.3"/><rect x="12.2" y="11.15" width="2.6" height="2.3"/><rect x="2.0" y="14.20" width="2.6" height="2.3"/><rect x="5.4" y="14.20" width="2.6" height="2.3"/><rect x="8.8" y="14.20" width="2.6" height="2.3"/><rect x="12.2" y="14.20" width="2.6" height="2.3"/><rect x="2.0" y="17.25" width="2.6" height="2.3"/><rect x="5.4" y="17.25" width="2.6" height="2.3"/><rect x="8.8" y="17.25" width="2.6" height="2.3"/><rect x="12.2" y="17.25" width="2.6" height="2.3"/></g><circle cx="13.4" cy="15.5" r="5.6" fill="#fd8b3b"/><line x1="17.60" y1="15.50" x2="19.50" y2="15.50" stroke="#fff" stroke-width="1.3"/><line x1="16.80" y1="17.97" x2="18.34" y2="19.09" stroke="#fff" stroke-width="1.3"/><line x1="14.70" y1="19.49" x2="15.29" y2="21.30" stroke="#fff" stroke-width="1.3"/><line x1="12.10" y1="19.49" x2="11.51" y2="21.30" stroke="#fff" stroke-width="1.3"/><line x1="10.00" y1="17.97" x2="8.46" y2="19.09" stroke="#fff" stroke-width="1.3"/><line x1="9.20" y1="15.50" x2="7.30" y2="15.50" stroke="#fff" stroke-width="1.3"/><line x1="10.00" y1="13.03" x2="8.46" y2="11.91" stroke="#fff" stroke-width="1.3"/><line x1="12.10" y1="11.51" x2="11.51" y2="9.70" stroke="#fff" stroke-width="1.3"/><line x1="14.70" y1="11.51" x2="15.29" y2="9.70" stroke="#fff" stroke-width="1.3"/><line x1="16.80" y1="13.03" x2="18.34" y2="11.91" stroke="#fff" stroke-width="1.3"/><circle cx="13.4" cy="15.5" r="3.9" fill="none" stroke="#fff" stroke-width="1.3"/><path d="M14.3 12.9 L12.2 16 L13.6 16 L12.7 18.3 L14.9 15 L13.5 15Z" fill="#fff"/></svg>
<div class="t b" style="left:876.4px;top:274.3px;font-size:14.7px;color:#fff">PERFORMANCE OF GRID-CONNECTED PV</div>
<svg class="a" style="left:1329px;top:274.1px" width="15" height="15" viewBox="0 0 15 15"><circle cx="7.5" cy="7.5" r="7" fill="#fff"/><text x="7.5" y="11.6" text-anchor="middle" font-family="Liberation Sans, sans-serif" font-weight="bold" font-size="11.5" fill="#fd8b3b">?</text></svg>
<div class="t" style="left:836.6px;top:309.2px;font-size:11.5px;color:#2a2a2a">Solar radiation database<sup style="font-size:10.5px;position:relative;top:-4px;left:0px;vertical-align:top;line-height:1">*</sup></div>
<div class="t" style="left:836.6px;top:332.0px;font-size:11.5px;color:#2a2a2a">PV technology<sup style="font-size:10.5px;position:relative;top:-4px;left:0px;vertical-align:top;line-height:1">*</sup></div>
<div class="t" style="left:836.6px;top:355.2px;font-size:11.5px;color:#2a2a2a">Installed peak PV power [kWp]<sup style="font-size:10.5px;position:relative;top:-4px;left:0px;vertical-align:top;line-height:1">*</sup></div>
<div class="t" style="left:836.6px;top:378.0px;font-size:11.5px;color:#2a2a2a">System loss [%]<sup style="font-size:10.5px;position:relative;top:-4px;left:0px;vertical-align:top;line-height:1">*</sup></div>
<div class="t b" style="left:836.6px;top:401.5px;font-size:11.5px;color:#111">Fixed mounting options</div>
<div class="t" style="left:836.6px;top:424.2px;font-size:11.5px;color:#2a2a2a">Mounting position<sup style="font-size:10.5px;position:relative;top:-4px;left:3px;vertical-align:top;line-height:1">*</sup></div>
<div class="t" style="left:836.6px;top:447.0px;font-size:11.5px;color:#2a2a2a">Slope [°]<sup style="font-size:10.5px;position:relative;top:-4px;left:0px;vertical-align:top;line-height:1">*</sup></div>
<div class="t" style="left:836.6px;top:470.2px;font-size:11.5px;color:#2a2a2a">Azimuth [°]<sup style="font-size:10.5px;position:relative;top:-4px;left:0px;vertical-align:top;line-height:1">*</sup></div>
<div class="t b" style="left:854.8px;top:492.5px;font-size:11.5px;color:#111">PV electricity price</div>
<div class="t" style="left:836.6px;top:512.4px;font-size:11.5px;color:#2a2a2a">PV system cost (your currency)<sup style="font-size:10.5px;position:relative;top:-4px;left:0px;vertical-align:top;line-height:1">*</sup></div>
<div class="t" style="left:836.6px;top:535.0px;font-size:11.5px;color:#2a2a2a">Interest [%/year]<sup style="font-size:10.5px;position:relative;top:-4px;left:0px;vertical-align:top;line-height:1">*</sup></div>
<div class="t" style="left:836.6px;top:558.1px;font-size:11.5px;color:#2a2a2a">Lifetime [years]<sup style="font-size:10.5px;position:relative;top:-4px;left:0px;vertical-align:top;line-height:1">*</sup></div>
<div class="a" style="left:1088.2px;top:307.6px;width:248.5px;height:18.8px;background:#fff;border:1px solid #dcdcdc;border-radius:3px"></div>
<div class="t" style="left:1094px;top:311.8px;font-size:11.5px;color:#555">PVGIS-SARAH2</div>
<svg class="a" style="left:1321.7px;top:314.4px" width="9" height="6" viewBox="0 0 9 6"><path d="M.8 1 L4.5 4.6 L8.2 1" fill="none" stroke="#333" stroke-width="1.3"/></svg>
<div class="a" style="left:1088.2px;top:330.1px;width:248.5px;height:19.2px;background:#fff;border:1px solid #dcdcdc;border-radius:3px"></div>
<div class="t" style="left:1094px;top:334.5px;font-size:11.5px;color:#555">Crystalline silicon</div>
<svg class="a" style="left:1321.7px;top:337.1px" width="9" height="6" viewBox="0 0 9 6"><path d="M.8 1 L4.5 4.6 L8.2 1" fill="none" stroke="#333" stroke-width="1.3"/></svg>
<div class="a" style="left:1088.2px;top:422.4px;width:248.5px;height:18.9px;background:#fff;border:1px solid #dcdcdc;border-radius:3px"></div>
<div class="t" style="left:1094px;top:426.7px;font-size:11.5px;color:#555">Free-standing</div>
<svg class="a" style="left:1321.7px;top:429.2px" width="9" height="6" viewBox="0 0 9 6"><path d="M.8 1 L4.5 4.6 L8.2 1" fill="none" stroke="#333" stroke-width="1.3"/></svg>
<div class="a" style="left:1213px;top:352.6px;width:123.2px;height:20.0px;background:#fff;border:1px solid #7f9c86;border-radius:3.5px"></div>
<div class="t" style="left:1266.2px;top:356.6px;width:60px;text-align:right;font-size:11.5px;color:#666">1.2</div>
<svg class="a" style="left:1317.2px;top:361.0px" width="13" height="11.4" viewBox="0 0 12 10.5"><path d="M1 5.6 L2.9 3.9 L5 6 L9.9 .9 L11.5 2.6 L5 9.6Z" fill="#2e6b3c"/></svg>
<div class="a" style="left:1213px;top:376.4px;width:123.2px;height:19.5px;background:#fff;border:1px solid #7f9c86;border-radius:3.5px"></div>
<div class="t" style="left:1266.2px;top:380.1px;width:60px;text-align:right;font-size:11.5px;color:#666">20</div>
<svg class="a" style="left:1317.2px;top:384.5px" width="13" height="11.4" viewBox="0 0 12 10.5"><path d="M1 5.6 L2.9 3.9 L5 6 L9.9 .9 L11.5 2.6 L5 9.6Z" fill="#2e6b3c"/></svg>
<div class="a" style="left:962.2px;top:445.3px;width:81.6px;height:19.5px;background:#fff;border:1px solid #7f9c86;border-radius:3.5px"></div>
<div class="t" style="left:973.8px;top:449.1px;width:60px;text-align:right;font-size:11.5px;color:#666">30</div>
<svg class="a" style="left:1024.8px;top:453.4px" width="13" height="11.4" viewBox="0 0 12 10.5"><path d="M1 5.6 L2.9 3.9 L5 6 L9.9 .9 L11.5 2.6 L5 9.6Z" fill="#2e6b3c"/></svg>
<div class="a" style="left:962.2px;top:468.6px;width:81.6px;height:19.0px;background:#fff;border:1px solid #7f9c86;border-radius:3.5px"></div>
<div class="t" style="left:973.8px;top:472.1px;width:60px;text-align:right;font-size:11.5px;color:#666">0</div>
<svg class="a" style="left:1024.8px;top:476.5px" width="13" height="11.4" viewBox="0 0 12 10.5"><path d="M1 5.6 L2.9 3.9 L5 6 L9.9 .9 L11.5 2.6 L5 9.6Z" fill="#2e6b3c"/></svg>
<div class="a" style="left:1213.3px;top:510.1px;width:123.0px;height:18.6px;background:#fff;border:1px solid #7f9c86;border-radius:3.5px"></div>
<div class="t" style="left:1266.3px;top:513.4px;width:60px;text-align:right;font-size:11.5px;color:#666">2800</div>
<svg class="a" style="left:1317.3px;top:517.8px" width="13" height="11.4" viewBox="0 0 12 10.5"><path d="M1 5.6 L2.9 3.9 L5 6 L9.9 .9 L11.5 2.6 L5 9.6Z" fill="#2e6b3c"/></svg>
<div class="a" style="left:1213.3px;top:532.7px;width:123.0px;height:20.1px;background:#e8f0fe;border:1px solid #7f9c86;border-radius:3.5px"></div>
<div class="t" style="left:1266.3px;top:536.8px;width:60px;text-align:right;font-size:11.5px;color:#666">0</div>
<svg class="a" style="left:1317.3px;top:541.1px" width="13" height="11.4" viewBox="0 0 12 10.5"><path d="M1 5.6 L2.9 3.9 L5 6 L9.9 .9 L11.5 2.6 L5 9.6Z" fill="#2e6b3c"/></svg>
<div class="a" style="left:1213.3px;top:556.3px;width:123.0px;height:19.0px;background:#fff;border:1px solid #7f9c86;border-radius:3.5px"></div>
<div class="t" style="left:1266.3px;top:559.8px;width:60px;text-align:right;font-size:11.5px;color:#666">20</div>
<svg class="a" style="left:1317.3px;top:564.2px" width="13" height="11.4" viewBox="0 0 12 10.5"><path d="M1 5.6 L2.9 3.9 L5 6 L9.9 .9 L11.5 2.6 L5 9.6Z" fill="#2e6b3c"/></svg>
<div class="a" style="left:1088.1px;top:450.3px;width:10.8px;height:10.8px;border:1px solid #767676;border-radius:2.5px;background:#fff"></div>
<div class="a" style="left:1088.1px;top:473px;width:10.8px;height:10.8px;border:1px solid #767676;border-radius:2.5px;background:#fff"></div>
<svg class="a" style="left:836.5px;top:491.6px" width="10.8" height="10.8" viewBox="0 0 12 12"><rect width="12" height="12" rx="2" fill="#1a73e8"/><path d="M2.6 6.2 L5 8.6 L9.6 3.4" fill="none" stroke="#fff" stroke-width="1.7"/></svg>
<div class="t" style="left:1106.5px;top:452.3px;font-size:11.5px;color:#2a2a2a">Optimize slope</div>
<div class="t" style="left:1106.5px;top:475px;font-size:11.5px;color:#2a2a2a">Optimize slope and azimuth</div>
<div class="red" style="left:1209.4px;top:349.8px;width:129px;height:48.2px"></div>
<div class="red" style="left:829.6px;top:441.4px;width:218.2px;height:47.6px"></div>
<div class="red" style="left:831.8px;top:507.4px;width:514.2px;height:72.2px"></div>
<div class="panel" style="left:694.3px;top:605.2px;width:678.3px;height:58px"></div>
<div class="btn" style="left:759.2px;top:615.4px;width:219.4px;height:27.8px"></div>
<svg class="a" style="left:819.4px;top:624.4px" width="12.6" height="9" viewBox="0 0 14 10"><path d="M0 5 C2.2 1.4 4.6 0 7 0 C9.4 0 11.8 1.4 14 5 C11.8 8.6 9.4 10 7 10 C4.6 10 2.2 8.6 0 5Z" fill="#fff"/><path d="M4.3 5.2 A2.8 2.8 0 0 0 9.7 5.2" fill="none" stroke="#337ab7" stroke-width="1.2"/><circle cx="7" cy="4.6" r="1" fill="#337ab7" opacity=".55"/></svg>
<div class="t" style="left:837.4px;top:623.8px;font-size:11px;color:#fff">Visualize results</div>
<div class="btn" style="left:1074.8px;top:618px;width:123.6px;height:27.6px"></div>
<svg class="a" style="left:1115.4px;top:626px" width="10.8" height="10.8" viewBox="0 0 12 12"><path d="M4.3 0h3.4v4.4h2.6L6 8.8 1.7 4.4h2.6zM0 9.3h12V12H0z" fill="#fff"/></svg>
<div class="t" style="left:1139.6px;top:626.2px;font-size:11px;color:#fff">csv</div>
<div class="btn" style="left:1200.3px;top:618px;width:121px;height:27.6px"></div>
<svg class="a" style="left:1237.8px;top:626px" width="10.8" height="10.8" viewBox="0 0 12 12"><path d="M4.3 0h3.4v4.4h2.6L6 8.8 1.7 4.4h2.6zM0 9.3h12V12H0z" fill="#fff"/></svg>
<div class="t" style="left:1262px;top:626.2px;font-size:11px;color:#fff">json</div><!--FORM-E-->

<!-- RESULTS -->
<!--RESULTS-S--><div class="panel" style="left:8.3px;top:677.5px;width:1364.4px;height:482.3px;border-top:0;border-radius:0 0 3px 3px"></div>
<div class="a" style="left:8.5px;top:678px;width:1362.8px;height:41px;background:#fd8b3b"></div>
<div class="t b" style="left:311px;top:687px;font-size:14.74px;color:#fff">PERFORMANCE OF GRID-CONNECTED PV: RESULTS</div>
<div class="a" style="left:917.3px;top:687.2px;width:110.6px;height:20px;background:#2a6496;border-radius:3px 0 0 3px;border:1px solid #25598a"></div>
<svg class="a" style="left:937.6px;top:692.4px" width="11.4" height="8.4" viewBox="0 0 14 10"><path d="M0 5 C2.2 1.4 4.6 0 7 0 C9.4 0 11.8 1.4 14 5 C11.8 8.6 9.4 10 7 10 C4.6 10 2.2 8.6 0 5Z" fill="#fff"/><path d="M4.3 5.2 A2.8 2.8 0 0 0 9.7 5.2" fill="none" stroke="#2a6496" stroke-width="1.2"/><circle cx="7" cy="4.6" r="1" fill="#2a6496" opacity=".55"/></svg>
<div class="t" style="left:958.5px;top:691.4px;font-size:11px;color:#fff">PV output</div>
<div class="a" style="left:1027.9px;top:687.2px;width:110px;height:20px;background:#337ab7;border-radius:0 3px 3px 0;border:1px solid #2e6da4;border-left:0"></div>
<svg class="a" style="left:1049.4px;top:692.4px" width="11.4" height="8.4" viewBox="0 0 14 10"><path d="M0 5 C2.2 1.4 4.6 0 7 0 C9.4 0 11.8 1.4 14 5 C11.8 8.6 9.4 10 7 10 C4.6 10 2.2 8.6 0 5Z" fill="#fff"/><path d="M4.3 5.2 A2.8 2.8 0 0 0 9.7 5.2" fill="none" stroke="#337ab7" stroke-width="1.2"/><circle cx="7" cy="4.6" r="1" fill="#337ab7" opacity=".55"/></svg>
<div class="t" style="left:1069.8px;top:691.4px;font-size:11px;color:#fff">Radiation</div>
<div class="btn" style="left:1142.3px;top:687.2px;width:107.4px;height:20px"></div>
<svg class="a" style="left:1180.2px;top:691.1px" width="10.8" height="10.8" viewBox="0 0 12 12"><circle cx="6" cy="6" r="6" fill="#fff"/><text x="6" y="9.6" text-anchor="middle" font-family="Liberation Sans, sans-serif" font-weight="bold" font-size="9.6" fill="#337ab7">?</text></svg>
<div class="t" style="left:1194.4px;top:691.4px;font-size:11px;color:#fff">Info</div>
<div class="btn" style="left:1254.6px;top:687.2px;width:107.4px;height:20px"></div>
<svg class="a" style="left:1289.8px;top:691px" width="12" height="11" viewBox="0 0 12 11"><path d="M2.6 0h5.6l1.2 1.2V4H2.6zM0 4.6h12v4.6H9.8V7H2.2v2.2H0zM2.9 7.7h6.2V11H2.9z" fill="#fff"/></svg>
<div class="t" style="left:1304.5px;top:691.4px;font-size:11px;color:#fff">PDF</div>
<div class="t b" style="left:70.4px;top:731.2px;width:200px;text-align:center;font-size:11.5px;color:#111">Summary</div>
<div class="t b" style="left:494.8px;top:731.2px;width:400px;text-align:center;font-size:11.5px;color:#111">Monthly energy output from fix-angle PV system</div>
<div class="t b" style="left:1102.9px;top:731px;width:200px;text-align:center;font-size:11.5px;color:#111">Outline of horizon</div>
<svg class="a" style="left:327px;top:755px" width="16" height="16" viewBox="0 0 16 16"><path d="M5.9 0h4.2v5.6h3L8 11 2.9 5.6h3zM0 11.9h16V16H0z" fill="#0a0a0a"/><circle cx="14" cy="14.2" r=".6" fill="#fff"/></svg>
<svg class="a" style="left:994.6px;top:756.8px" width="16" height="16" viewBox="0 0 16 16"><path d="M5.9 0h4.2v5.6h3L8 11 2.9 5.6h3zM0 11.9h16V16H0z" fill="#0a0a0a"/><circle cx="14" cy="14.2" r=".6" fill="#fff"/></svg>
<svg class="a" style="left:1333.6px;top:756.5px" width="16" height="16" viewBox="0 0 16 16"><path d="M5.9 0h4.2v5.6h3L8 11 2.9 5.6h3zM0 11.9h16V16H0z" fill="#0a0a0a"/><circle cx="14" cy="14.2" r=".6" fill="#fff"/></svg>
<div class="a" style="left:31.9px;top:773.4px;width:311.3px;height:17.6px;background:#0065a2"></div>
<div class="t" style="left:36.3px;top:777px;font-size:10.9px;color:#fff">Provided inputs:</div>
<div class="a" style="left:31.9px;top:919.8px;width:311.3px;height:18.2px;background:#0065a2"></div>
<div class="t" style="left:36.3px;top:924px;font-size:10.9px;color:#fff">Simulation outputs:</div>
<div class="t" style="left:36.3px;top:795.0px;font-size:10.9px;color:#222">Location [Lat/Lon]:</div>
<div class="t" style="left:238.8px;top:795.0px;width:100px;text-align:right;font-size:10.9px;color:#222">49.654,8.570</div>
<div class="t" style="left:36.3px;top:813.7px;font-size:10.9px;color:#222">Horizon:</div>
<div class="t" style="left:238.8px;top:813.7px;width:100px;text-align:right;font-size:10.9px;color:#222">Calculated</div>
<div class="t" style="left:36.3px;top:832.0px;font-size:10.9px;color:#222">Database used:</div>
<div class="t" style="left:238.8px;top:832.0px;width:100px;text-align:right;font-size:10.9px;color:#222">PVGIS-SARAH2</div>
<div class="t" style="left:36.3px;top:850.1px;font-size:10.9px;color:#222">PV technology:</div>
<div class="t" style="left:238.8px;top:850.1px;width:100px;text-align:right;font-size:10.9px;color:#222">Crystalline silicon</div>
<div class="t" style="left:36.3px;top:868.3px;font-size:10.9px;color:#222">PV installed [kWp]:</div>
<div class="t" style="left:238.8px;top:868.3px;width:100px;text-align:right;font-size:10.9px;color:#222">1.2</div>
<div class="t" style="left:36.3px;top:887.0px;font-size:10.9px;color:#222">System loss [%]:</div>
<div class="t" style="left:238.8px;top:887.0px;width:100px;text-align:right;font-size:10.9px;color:#222">20</div>
<div class="t" style="left:36.3px;top:942.2px;font-size:10.9px;color:#222">Slope angle [°]:</div>
<div class="t" style="left:238.8px;top:942.2px;width:100px;text-align:right;font-size:10.9px;color:#222">30</div>
<div class="t" style="left:36.3px;top:960.8px;font-size:10.9px;color:#222">Azimuth angle [°]:</div>
<div class="t" style="left:238.8px;top:960.8px;width:100px;text-align:right;font-size:10.9px;color:#222">0</div>
<div class="t" style="left:36.3px;top:997.0px;font-size:10.9px;color:#222">Yearly in-plane irradiation [kWh/m<sup style="font-size:8.5px;line-height:0;vertical-align:3.5px">2</sup>]:</div>
<div class="t" style="left:238.8px;top:997.0px;width:100px;text-align:right;font-size:10.9px;color:#222">1350.98</div>
<div class="t" style="left:36.3px;top:1015.4px;font-size:10.9px;color:#222">Year-to-year variability [kWh]:</div>
<div class="t" style="left:238.8px;top:1015.4px;width:100px;text-align:right;font-size:10.9px;color:#222">61.49</div>
<div class="t" style="left:36.3px;top:1034.1px;font-size:10.9px;color:#222">Changes in output due to:</div>
<div class="t" style="left:50.8px;top:1052.2px;font-size:10.9px;color:#222">Angle of incidence [%]:</div>
<div class="t" style="left:238.8px;top:1052.2px;width:100px;text-align:right;font-size:10.9px;color:#222">-3.08</div>
<div class="t" style="left:50.8px;top:1070.6px;font-size:10.9px;color:#222">Spectral effects [%]:</div>
<div class="t" style="left:238.8px;top:1070.6px;width:100px;text-align:right;font-size:10.9px;color:#222">1.68</div>
<div class="t" style="left:50.8px;top:1089.2px;font-size:10.9px;color:#222">Temperature and low irradiance [%]:</div>
<div class="t" style="left:238.8px;top:1089.2px;width:100px;text-align:right;font-size:10.9px;color:#222">-6.66</div>
<div class="t" style="left:36.3px;top:1107.6px;font-size:10.9px;color:#222">Total loss [%]:</div>
<div class="t" style="left:238.8px;top:1107.6px;width:100px;text-align:right;font-size:10.9px;color:#222">-26.41</div>
<div class="t" style="left:36.3px;top:1125.5px;font-size:10.9px;color:#222">PV electricity cost [per kWh]:</div>
<div class="t" style="left:238.8px;top:1125.5px;width:100px;text-align:right;font-size:10.9px;color:#222">0.164</div>
<div class="red" style="left:30.4px;top:846.4px;width:314.2px;height:61.6px"></div>
<div class="red" style="left:29.4px;top:971.1px;width:314.8px;height:20.2px;background:#fff"></div>
<div class="t" style="left:36.3px;top:979.2px;font-size:10.9px;color:#222">Yearly PV energy production [kWh]:</div>
<div class="t" style="left:238.8px;top:979.2px;width:100px;text-align:right;font-size:10.9px;color:#222">1192.97</div>
<div class="red" style="left:30.4px;top:1085.5px;width:318.8px;height:60.8px"></div>
<svg class="a" style="left:370px;top:765px" width="660" height="380" viewBox="370 765 660 380"><line x1="432.7" x2="1010.5" y1="1054.2" y2="1054.2" stroke="#e4e4e4" stroke-width="1"/><line x1="432.7" x2="1010.5" y1="1007.9" y2="1007.9" stroke="#e4e4e4" stroke-width="1"/><line x1="432.7" x2="1010.5" y1="961.7" y2="961.7" stroke="#e4e4e4" stroke-width="1"/><line x1="432.7" x2="1010.5" y1="915.5" y2="915.5" stroke="#e4e4e4" stroke-width="1"/><line x1="432.7" x2="1010.5" y1="869.3" y2="869.3" stroke="#e4e4e4" stroke-width="1"/><line x1="432.7" x2="1010.5" y1="823.0" y2="823.0" stroke="#e4e4e4" stroke-width="1"/><line x1="432.7" x2="1010.5" y1="776.8" y2="776.8" stroke="#e4e4e4" stroke-width="1"/><rect x="445.0" y="1024.2" width="23.6" height="76.2" fill="#27a7fb"/><rect x="493.1" y="987.4" width="23.6" height="113.0" fill="#27a7fb"/><rect x="541.3" y="909.4" width="23.6" height="191.0" fill="#27a7fb"/><rect x="589.4" y="844.1" width="23.6" height="256.3" fill="#27a7fb"/><rect x="637.6" y="833.8" width="23.6" height="266.6" fill="#27a7fb"/><rect x="685.7" y="829.9" width="23.6" height="270.5" fill="#27a7fb"/><rect x="733.9" y="827.5" width="23.6" height="272.9" fill="#27a7fb"/><rect x="782.0" y="851.9" width="23.6" height="248.5" fill="#27a7fb"/><rect x="830.2" y="887.7" width="23.6" height="212.7" fill="#27a7fb"/><rect x="878.3" y="953.6" width="23.6" height="146.8" fill="#27a7fb"/><rect x="926.5" y="1020.0" width="23.6" height="80.4" fill="#27a7fb"/><rect x="974.6" y="1044.0" width="23.6" height="56.4" fill="#27a7fb"/><line x1="432.7" x2="1010.5" y1="1100.8000000000002" y2="1100.8000000000002" stroke="#c8d2e4" stroke-width="1.2"/><line x1="432.7" x2="432.7" y1="1100.8000000000002" y2="1109.4" stroke="#c8d2e4" stroke-width="1"/><line x1="480.8" x2="480.8" y1="1100.8000000000002" y2="1109.4" stroke="#c8d2e4" stroke-width="1"/><line x1="529.0" x2="529.0" y1="1100.8000000000002" y2="1109.4" stroke="#c8d2e4" stroke-width="1"/><line x1="577.1" x2="577.1" y1="1100.8000000000002" y2="1109.4" stroke="#c8d2e4" stroke-width="1"/><line x1="625.3" x2="625.3" y1="1100.8000000000002" y2="1109.4" stroke="#c8d2e4" stroke-width="1"/><line x1="673.5" x2="673.5" y1="1100.8000000000002" y2="1109.4" stroke="#c8d2e4" stroke-width="1"/><line x1="721.6" x2="721.6" y1="1100.8000000000002" y2="1109.4" stroke="#c8d2e4" stroke-width="1"/><line x1="769.8" x2="769.8" y1="1100.8000000000002" y2="1109.4" stroke="#c8d2e4" stroke-width="1"/><line x1="817.9" x2="817.9" y1="1100.8000000000002" y2="1109.4" stroke="#c8d2e4" stroke-width="1"/><line x1="866.0" x2="866.0" y1="1100.8000000000002" y2="1109.4" stroke="#c8d2e4" stroke-width="1"/><line x1="914.2" x2="914.2" y1="1100.8000000000002" y2="1109.4" stroke="#c8d2e4" stroke-width="1"/><line x1="962.3" x2="962.3" y1="1100.8000000000002" y2="1109.4" stroke="#c8d2e4" stroke-width="1"/><line x1="1010.5" x2="1010.5" y1="1100.8000000000002" y2="1109.4" stroke="#c8d2e4" stroke-width="1"/><g font-family="Liberation Sans, sans-serif" font-size="10.8" fill="#666"><text x="419" y="1105.1" text-anchor="end">0</text><text x="419" y="1058.9" text-anchor="end">25</text><text x="419" y="1012.6" text-anchor="end">50</text><text x="419" y="966.4" text-anchor="end">75</text><text x="419" y="920.2" text-anchor="end">100</text><text x="419" y="874.0" text-anchor="end">125</text><text x="419" y="827.7" text-anchor="end">150</text><text x="419" y="781.5" text-anchor="end">175</text><text x="456.8" y="1118" text-anchor="middle">Jan</text><text x="504.9" y="1118" text-anchor="middle">Feb</text><text x="553.1" y="1118" text-anchor="middle">Mar</text><text x="601.2" y="1118" text-anchor="middle">Apr</text><text x="649.4" y="1118" text-anchor="middle">May</text><text x="697.5" y="1118" text-anchor="middle">Jun</text><text x="745.7" y="1118" text-anchor="middle">Jul</text><text x="793.8" y="1118" text-anchor="middle">Aug</text><text x="842.0" y="1118" text-anchor="middle">Sep</text><text x="890.1" y="1118" text-anchor="middle">Oct</text><text x="938.3" y="1118" text-anchor="middle">Nov</text><text x="986.4" y="1118" text-anchor="middle">Dec</text><text x="720.9" y="1133.8" text-anchor="middle" fill="#777">Month</text><text transform="translate(392.4 938.9) rotate(-90)" text-anchor="middle" fill="#777" font-size="11">PV energy output [kWh]</text></g><ellipse cx="412.5" cy="849" rx="20.9" ry="43" fill="none" stroke="#c9272c" stroke-width="1.3"/><rect x="534.3" y="810.7" width="331.4" height="325.5" fill="none" stroke="#d9262c" stroke-width="1.5"/></svg>
<svg class="a" style="left:1050px;top:800px" width="320" height="345" viewBox="1050 800 320 345"><path d="M1248.4 838.9 L1256.3 841.9 L1263.9 845.5 L1271.3 849.5 L1278.3 854.1 L1285.1 859.2 L1291.5 864.8 L1297.4 870.8 L1303.0 877.2 L1308.0 884.0 L1312.6 891.1 L1316.6 898.6 L1320.2 906.3 L1323.1 914.3 L1325.5 922.4 L1327.2 930.7 L1328.4 939.2 L1329.0 947.7 L1328.9 956.1 L1328.3 964.6 L1327.0 973.0 L1325.2 981.3 L1322.7 989.4 L1319.7 997.3 L1316.2 1005.0 L1312.1 1012.4 L1307.5 1019.5 L1302.4 1026.2 L1296.9 1032.6 L1290.9 1038.5 L1290.1 1037.6 L1295.9 1031.7 L1301.2 1025.3 L1306.1 1018.6 L1310.5 1011.5 L1314.4 1004.2 L1317.8 996.6 L1320.7 988.7 L1323.0 980.7 L1324.7 972.6 L1325.8 964.4 L1326.4 956.1 L1326.4 947.7 L1325.8 939.4 L1324.7 931.2 L1323.0 923.1 L1320.7 915.1 L1317.8 907.2 L1314.4 899.6 L1310.5 892.3 L1306.1 885.2 L1301.2 878.5 L1295.9 872.1 L1290.1 866.2 L1283.9 860.6 L1277.4 855.5 L1270.5 850.8 L1263.3 846.7 L1255.8 843.0 L1248.1 839.9 Z" fill="#808388"/><circle cx="1207.3" cy="951.9" r="120.2" fill="#c6d1dc"/><circle cx="1207.3" cy="951.9" r="120.2" fill="none" stroke="#b5bfca" stroke-width=".8"/><circle cx="1207.3" cy="951.9" r="60.1" fill="none" stroke="#cad5df" stroke-width=".8"/><line x1="1207.3" y1="951.9" x2="1207.3" y2="831.7" stroke="#cad5df" stroke-width=".8"/><line x1="1207.3" y1="951.9" x2="1292.3" y2="866.9" stroke="#cad5df" stroke-width=".8"/><line x1="1207.3" y1="951.9" x2="1327.5" y2="951.9" stroke="#cad5df" stroke-width=".8"/><line x1="1207.3" y1="951.9" x2="1292.3" y2="1036.9" stroke="#cad5df" stroke-width=".8"/><line x1="1207.3" y1="951.9" x2="1207.3" y2="1072.1" stroke="#cad5df" stroke-width=".8"/><line x1="1207.3" y1="951.9" x2="1122.3" y2="1036.9" stroke="#cad5df" stroke-width=".8"/><line x1="1207.3" y1="951.9" x2="1087.1" y2="951.9" stroke="#cad5df" stroke-width=".8"/><line x1="1207.3" y1="951.9" x2="1122.3" y2="866.9" stroke="#cad5df" stroke-width=".8"/><path d="M1110.8 878.8 C1110.4 880.7 1108.7 886.6 1108.3 890.0 C1107.9 893.4 1108.3 895.7 1108.6 899.4 C1108.9 903.1 1109.2 907.4 1110.1 912.0 C1111.0 916.6 1112.1 922.1 1113.9 926.8 C1115.6 931.5 1118.1 935.7 1120.6 940.0 C1123.1 944.3 1125.8 948.9 1129.1 952.8 C1132.4 956.7 1136.5 960.2 1140.6 963.5 C1144.7 966.8 1148.9 970.0 1153.6 972.6 C1158.3 975.2 1163.5 977.3 1168.6 979.2 C1173.7 981.1 1179.6 982.8 1184.1 984.0 C1188.6 985.2 1191.8 986.0 1195.6 986.6 C1199.4 987.2 1203.1 987.6 1207.0 987.6 C1210.9 987.6 1215.1 987.2 1219.0 986.6 C1222.9 986.0 1226.0 985.2 1230.5 984.0 C1235.0 982.8 1240.9 981.1 1246.0 979.2 C1251.1 977.3 1256.3 975.2 1261.0 972.6 C1265.7 970.0 1269.9 966.8 1274.0 963.5 C1278.1 960.2 1282.2 956.7 1285.5 952.8 C1288.8 948.9 1291.5 944.3 1294.0 940.0 C1296.5 935.7 1299.0 931.5 1300.7 926.8 C1302.5 922.1 1303.6 916.6 1304.5 912.0 C1305.4 907.4 1305.7 903.1 1306.0 899.4 C1306.3 895.7 1306.7 893.4 1306.3 890.0 C1305.9 886.6 1304.2 880.7 1303.8 878.8" fill="none" stroke="#1a1a1a" stroke-width="1.1" stroke-dasharray="5.5 3"/><path d="M1113.0 1026.5 C1117.2 1028.2 1129.2 1033.8 1138.0 1037.0 C1146.8 1040.2 1157.4 1043.5 1165.6 1045.5 C1173.8 1047.5 1180.0 1048.5 1187.0 1049.3 C1194.0 1050.1 1200.5 1050.6 1207.3 1050.6 C1214.1 1050.6 1221.0 1050.1 1228.0 1049.3 C1235.0 1048.5 1240.8 1047.6 1249.0 1045.5 C1257.2 1043.4 1268.0 1040.0 1277.0 1036.5 C1286.0 1033.0 1298.7 1026.8 1303.0 1024.8" fill="none" stroke="#222" stroke-width="1" stroke-dasharray="1 1"/><g font-family="Liberation Sans, sans-serif" font-size="10.8" fill="#666" text-anchor="middle"><text x="1207.3" y="822.2">N</text><text x="1309.8" y="862.2">NE</text><text x="1344.7" y="957.2">E</text><text x="1308.7" y="1052.1">SE</text><text x="1207.3" y="1091.1">S</text><text x="1104.6" y="1052.1">SW</text><text x="1068.3" y="957.2">W</text><text x="1104.6" y="862.2">NW</text><text x="1198.9" y="890.0">45</text><text x="1198.9" y="950.1">90</text></g><rect x="1063.9" y="1096.4" width="14.6" height="10.2" fill="#666"/><line x1="1063.9" x2="1078.5" y1="1114.3" y2="1114.3" stroke="#222" stroke-width="1.1" stroke-dasharray="5 2.5"/><line x1="1063.9" x2="1078.5" y1="1126.6" y2="1126.6" stroke="#222" stroke-width="1" stroke-dasharray="1 1"/><g font-family="Liberation Sans, sans-serif" font-size="11" fill="#333"><text x="1083.6" y="1106.0">Horizon height</text><text x="1083.6" y="1118.2">Sun height, June</text><text x="1083.6" y="1130.5">Sun height, December</text></g></svg><!--RESULTS-E-->

</body>
</html>
